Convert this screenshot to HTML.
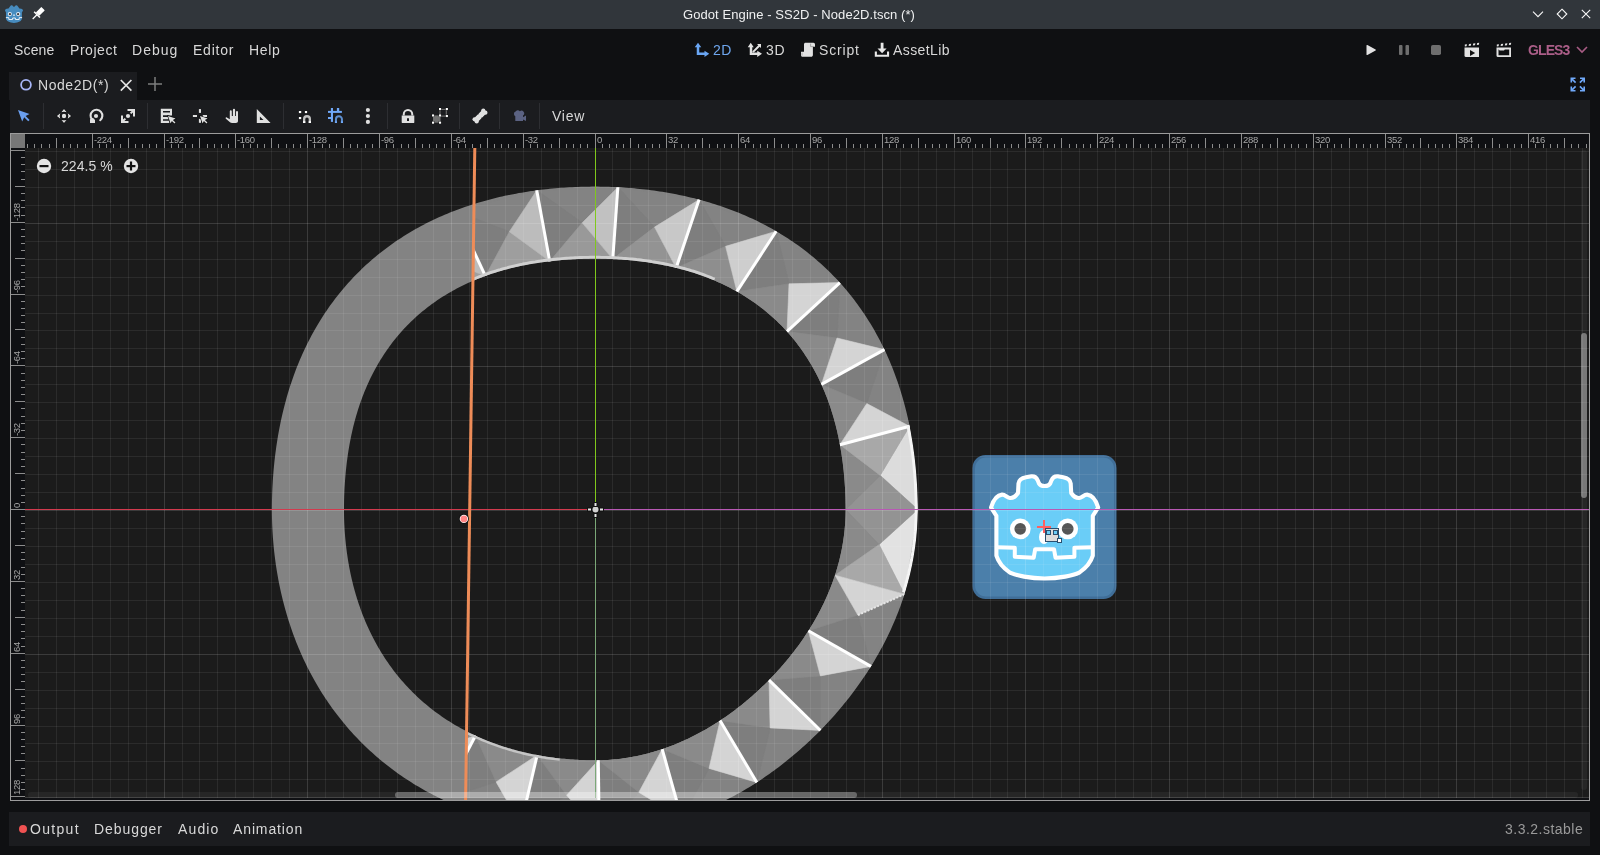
<!DOCTYPE html>
<html><head><meta charset="utf-8"><style>
*{margin:0;padding:0;box-sizing:border-box}
body{width:1600px;height:855px;overflow:hidden;background:#0f1012;font-family:"Liberation Sans",sans-serif;position:relative}
.a{position:absolute;white-space:pre;will-change:transform}
.ic{position:absolute;overflow:visible}
.rl{font-family:"Liberation Sans",sans-serif;font-size:9.5px;fill:#a6a6a6;letter-spacing:-0.3px}
.t14{font-size:14px;line-height:14px;color:#d8d8d8}
</style></head><body>
<div class="a" style="left:0;top:0;width:1600px;height:29px;background:#31363b"></div>
<div class="a" style="left:683px;top:8px;font-size:13px;line-height:13px;color:#eff0f1;letter-spacing:0.08px">Godot Engine - SS2D - Node2D.tscn (*)</div>
<div class="a t14" style="left:14px;top:43px;letter-spacing:0.15px;">Scene</div><div class="a t14" style="left:70px;top:43px;letter-spacing:0.55px;">Project</div><div class="a t14" style="left:132px;top:43px;letter-spacing:1.03px;">Debug</div><div class="a t14" style="left:193px;top:43px;letter-spacing:0.76px;">Editor</div><div class="a t14" style="left:249px;top:43px;letter-spacing:0.70px;">Help</div>
<div class="a t14" style="left:713px;top:43px;letter-spacing:0.49px;color:#6ea6ee">2D</div><div class="a t14" style="left:766px;top:43px;letter-spacing:0.59px;">3D</div><div class="a t14" style="left:819px;top:43px;letter-spacing:0.82px;">Script</div><div class="a t14" style="left:893px;top:43px;letter-spacing:0.41px;">AssetLib</div>
<div class="a" style="left:1528px;top:43px;font-size:14px;line-height:14px;font-weight:bold;color:#ab5e88;letter-spacing:-0.9px">GLES3</div>
<div class="a" style="left:9px;top:72px;width:128px;height:28px;background:#1b1c1f"></div>
<div class="a" style="left:10px;top:100px;width:1580px;height:33px;background:#1b1c1f"></div>
<div class="a t14" style="left:38px;top:78px;letter-spacing:0.56px;">Node2D(*)</div>
<div class="a t14" style="left:552px;top:109px;letter-spacing:0.77px;">View</div>
<div class="a" style="left:43px;top:103px;width:1px;height:26px;background:#2d2e32"></div><div class="a" style="left:147px;top:103px;width:1px;height:26px;background:#2d2e32"></div><div class="a" style="left:283px;top:103px;width:1px;height:26px;background:#2d2e32"></div><div class="a" style="left:387px;top:103px;width:1px;height:26px;background:#2d2e32"></div><div class="a" style="left:459px;top:103px;width:1px;height:26px;background:#2d2e32"></div><div class="a" style="left:499px;top:103px;width:1px;height:26px;background:#2d2e32"></div><div class="a" style="left:539px;top:103px;width:1px;height:26px;background:#2d2e32"></div>
<svg class="ic" style="left:15px;top:107px" width="16" height="16" viewBox="0 0 16 16"><path d="M3,3 L7.2,14.5 L9.2,10.3 L13.2,14.3 L14.6,12.9 L10.6,8.9 L14.5,7 Z" fill="#6a9ff0"/></svg><svg class="ic" style="left:56px;top:108px" width="16" height="16" viewBox="0 0 16 16"><g fill="#e0e0e0" stroke="#0b0b0c" stroke-width="1" paint-order="stroke"><circle cx="8" cy="8" r="2.2"/><path d="M5.3,4.3 L8,0.9 L10.7,4.3 Q8,3.1 5.3,4.3 Z"/><path d="M5.3,11.7 L8,15.1 L10.7,11.7 Q8,12.9 5.3,11.7 Z"/><path d="M4.3,5.3 L0.9,8 L4.3,10.7 Q3.1,8 4.3,5.3 Z"/><path d="M11.7,5.3 L15.1,8 L11.7,10.7 Q12.9,8 11.7,5.3 Z"/></g></svg><svg class="ic" style="left:88px;top:108px" width="16" height="16" viewBox="0 0 16 16"><path d="M4.1,11.6 A5.9,5.9 0 1 1 12.2,12.2" fill="none" stroke="#e0e0e0" stroke-width="2.1" stroke-linecap="round"/><path d="M2,15 V11.2 L4.9,9.8 L7,12 V15 Z" fill="#e0e0e0"/><circle cx="8" cy="8" r="2.1" fill="#e0e0e0"/></svg><svg class="ic" style="left:120px;top:108px" width="16" height="16" viewBox="0 0 16 16"><g fill="#e0e0e0"><circle cx="8" cy="8" r="2.1"/><path d="M7.5,1 H15 V8.5 H13 V4.4 L11.3,6.1 L9.9,4.7 L11.6,3 H7.5 Z"/><path d="M8.5,15 H1 V7.5 H3 V11.6 L4.7,9.9 L6.1,11.3 L4.4,13 H8.5 Z"/></g></svg><svg class="ic" style="left:160px;top:108px" width="16" height="16" viewBox="0 0 16 16"><path fill-rule="evenodd" fill="#e0e0e0" d="M0.8,0.8 H12 V7.6 H9.4 V15 H0.8 Z M3,3 V4.6 H10 V3 Z M3,7.3 V8.9 H9.4 V7.3 Z M3,11.2 V12.8 H9.4 V11.2 Z"/><path d="M8,8 L10.6,15.6 L11.9,12.9 L14.5,15.5 L15.5,14.5 L12.9,11.9 L15.6,10.6 Z" fill="#e0e0e0" stroke="#0b0b0c" stroke-width="1.2" paint-order="stroke"/></svg><svg class="ic" style="left:192px;top:108px" width="16" height="16" viewBox="0 0 16 16"><g fill="#e0e0e0"><rect x="6.9" y="1.1" width="2.1" height="3.8"/><rect x="0.9" y="7" width="4.1" height="2"/><rect x="10.8" y="7" width="4.2" height="2"/><rect x="6.9" y="10.9" width="2.1" height="3.9"/></g><path d="M8,8.1 L10.6,15.6 L11.9,12.9 L14.5,15.5 L15.5,14.5 L12.9,11.9 L15.7,10.6 Z" fill="#e0e0e0" stroke="#0b0b0c" stroke-width="1.2" paint-order="stroke"/></svg><svg class="ic" style="left:224px;top:108px" width="16" height="16" viewBox="0 0 16 16"><path fill="#e0e0e0" d="M5.8,3.3 A1,1 0 0 1 7.8,3.3 V8 H8.9 V1.9 A1.1,1.1 0 0 1 11.1,1.9 V8 H12 V3.9 A1,1 0 0 1 14,3.9 V12.8 C14,14.2 13.2,15 11.8,15 H8.2 C7.2,15 6.4,14.6 5.7,13.9 L1.9,10.7 C1.2,10.1 1.9,8.9 2.8,9.4 L5.8,11.2 Z"/></svg><svg class="ic" style="left:256px;top:108px" width="16" height="16" viewBox="0 0 16 16"><path fill-rule="evenodd" fill="#e0e0e0" d="M0.8,1 L14.6,15 H0.8 Z M3.9,8.4 V11.9 H7.5 Z"/></svg><svg class="ic" style="left:296px;top:108px" width="16" height="16" viewBox="0 0 16 16"><g fill="#ffffff"><rect x="2.9" y="3" width="2.3" height="2.1"/><rect x="8.9" y="3" width="2.2" height="2.1"/><rect x="2.9" y="9" width="2.3" height="2.1"/></g><path d="M8.15,15 V11.1 A2.85,2.85 0 0 1 13.85,11.1 V15" fill="none" stroke="#c2c2c2" stroke-width="2.3"/><rect x="7" y="13.2" width="2.3" height="1.8" fill="#fff"/><rect x="12.7" y="13.2" width="2.3" height="1.8" fill="#fff"/></svg><svg class="ic" style="left:327px;top:108px" width="16" height="16" viewBox="0 0 16 16"><g fill="#70a8f8"><rect x="3.9" y="0" width="2.1" height="13.9"/><rect x="9.9" y="0" width="2.3" height="3.8"/><rect x="1" y="2.9" width="13.9" height="2"/><rect x="1" y="9" width="4.9" height="2"/></g><path d="M8.95,15 V11.25 A3,3 0 0 1 14.95,11.25 V15" fill="none" stroke="#5e8fd0" stroke-width="2"/><rect x="7.9" y="13.3" width="2.1" height="1.7" fill="#70a8f8"/><rect x="13.9" y="13.3" width="2.1" height="1.7" fill="#70a8f8"/></svg><svg class="ic" style="left:360px;top:108px" width="16" height="16" viewBox="0 0 16 16"><g fill="#e0e0e0"><circle cx="7.9" cy="2" r="2.1"/><circle cx="7.9" cy="8" r="2.1"/><circle cx="7.9" cy="13.9" r="2.1"/></g></svg><svg class="ic" style="left:400px;top:108px" width="16" height="16" viewBox="0 0 16 16"><path fill="none" stroke="#e0e0e0" stroke-width="2" d="M3.75,7.6 V6.15 A4.25,4.25 0 0 1 12.25,6.15 V7.6"/><path fill-rule="evenodd" fill="#e0e0e0" d="M1.7,7.4 H14.3 V14.2 Q14.3,15.1 13.4,15.1 H2.6 Q1.7,15.1 1.7,14.2 Z M7,10.2 V13 H9 V10.2 Z"/></svg><svg class="ic" style="left:432px;top:108px" width="16" height="16" viewBox="0 0 16 16"><rect x="1" y="7.4" width="7.5" height="7.3" fill="#707070"/><rect x="8" y="1.4" width="6.3" height="6.7" fill="none" stroke="#707070" stroke-width="1.1"/><g fill="#fff" stroke="#0b0b0c" stroke-width="0.6" paint-order="stroke"><rect x="0" y="6.4" width="2.1" height="2.1"/><rect x="7" y="6.4" width="2.1" height="2.1"/><rect x="0" y="13.6" width="2.1" height="2.1"/><rect x="7" y="13.6" width="2.1" height="2.1"/><rect x="7" y="0" width="2.1" height="2.1"/><rect x="13.8" y="0" width="2.1" height="2.1"/><rect x="13.8" y="7" width="2.1" height="2.1"/></g></svg><svg class="ic" style="left:472px;top:108px" width="16" height="16" viewBox="0 0 16 16"><g fill="#e0e0e0"><path d="M3.8,8.9 L8.9,3.8 L12.2,7.1 L7.1,12.2 Z"/><circle cx="11.3" cy="2.6" r="2.1"/><circle cx="13.4" cy="4.7" r="2.1"/><circle cx="2.6" cy="11.3" r="2.1"/><circle cx="4.7" cy="13.4" r="2.1"/><path d="M9.8,2.6 L13.4,6.2 L10.2,9.4 L6.6,5.8 Z M6.2,13.4 L2.6,9.8 L5.8,6.6 L9.4,10.2 Z"/></g></svg><svg class="ic" style="left:511px;top:108px" width="16" height="16" viewBox="0 0 16 16"><path fill="#5b6282" d="M4.6,3.6 A2.4,2.4 0 0 1 8.8,3.2 A2.4,2.4 0 1 1 12,7.6 V9.2 L15,7.6 V13.1 L12,11.5 V13.1 H4.3 V8.2 A2.5,2.5 0 0 1 4.6,3.6 Z"/></svg>
<svg class="ic" style="left:5px;top:5px" width="18" height="18" viewBox="0 0 18 18"><path fill="#478cbf" d="M0,5.5 C0.3,4.6 0.9,3.9 1.6,3.8 L3.5,3.5 L5.2,1.3 C5.6,0.6 6,0.3 6.5,0.3 C7.2,0.3 7.8,0.8 8.1,1.3 L9,2 L9.8,1.3 C10.2,0.8 10.8,0.3 11.4,0.3 C11.9,0.3 12.4,0.6 12.8,1.3 L14.4,3.4 L16.3,3.8 C17.1,3.9 17.7,4.6 18,5.5 L16.9,7.4 V13.3 C16.9,16 13.5,17.9 9,17.9 C4.5,17.9 1,16 1,13.3 V7.4 Z"/><path d="M0.9,12.6 H3.8 V14.5 H7.6 V13 H10.4 V14.5 H14.2 V12.6 H17.1" fill="none" stroke="#e6eef6" stroke-width="1"/><circle cx="4.8" cy="9.1" r="2.1" fill="#e6eef6"/><circle cx="13.2" cy="9.1" r="2.1" fill="#e6eef6"/><circle cx="4.9" cy="9.2" r="1.15" fill="#414042"/><circle cx="13.1" cy="9.2" r="1.15" fill="#414042"/><rect x="8.3" y="9.3" width="1.4" height="1.8" rx="0.6" fill="#e6eef6"/></svg><svg class="ic" style="left:32px;top:7px" width="13" height="13" viewBox="0 0 13 13"><g transform="translate(0.7,12) rotate(-45)" fill="#ffffff"><rect x="0" y="-0.6" width="6" height="1.2"/><rect x="5.4" y="-4.1" width="1.5" height="8.2"/><rect x="6.8" y="-2.4" width="7.8" height="4.8" rx="0.4"/></g></svg><svg class="ic" style="left:1531px;top:8px" width="14" height="14" viewBox="0 0 14 14"><path d="M2,3.6 L7,8.6 L12,3.6" fill="none" stroke="#f8f8f8" stroke-width="1.1"/></svg><svg class="ic" style="left:1555px;top:7px" width="14" height="14" viewBox="0 0 14 14"><path d="M7,2.2 L11.8,7 L7,11.8 L2.2,7 Z" fill="none" stroke="#f8f8f8" stroke-width="1.1"/></svg><svg class="ic" style="left:1579px;top:7px" width="14" height="14" viewBox="0 0 14 14"><path d="M2.8,2.8 L11.2,11.2 M11.2,2.8 L2.8,11.2" fill="none" stroke="#f8f8f8" stroke-width="1.1"/></svg><svg class="ic" style="left:18px;top:77px" width="16" height="16" viewBox="0 0 16 16"><circle cx="8" cy="7.8" r="4.9" fill="none" stroke="#a7b5f7" stroke-width="1.8"/></svg><svg class="ic" style="left:118px;top:77px" width="16" height="16" viewBox="0 0 16 16"><path d="M2.8,3 L13.4,13.6 M13.4,3 L2.8,13.6" fill="none" stroke="#e4e4e4" stroke-width="1.7"/></svg><svg class="ic" style="left:147px;top:76px" width="16" height="16" viewBox="0 0 16 16"><path d="M8,1 V15 M1,8 H15" fill="none" stroke="#7e7e7e" stroke-width="1.5"/></svg><svg class="ic" style="left:694px;top:42px" width="16" height="16" viewBox="0 0 16 16"><path fill="#6aa6f4" d="M0.75,5.25 L4,0.75 L7.25,5.25 H5.25 V10.5 H10.5 V8.75 L15.25,11.75 L10.5,15 V13 H2.75 V5.25 Z"/></svg><svg class="ic" style="left:746px;top:42px" width="17" height="16" viewBox="0 0 17 16"><g fill="#e2e2e2"><path d="M1.75,5.25 L4.75,0.75 L7.75,5.25 H6.25 V10.5 H11.25 V8.75 L16,11.75 L11.25,15 V13 H3.75 V5.25 Z"/><path d="M11,2 H15 V6 L13.7,4.7 L7.6,10.8 L6.2,9.4 L12.3,3.3 Z"/></g></svg><svg class="ic" style="left:800px;top:42px" width="16" height="16" viewBox="0 0 16 16"><path fill="#e2e2e2" d="M5.6,0.7 H13.4 C14.4,0.7 15,1.5 15,2.5 V4.8 H12.9 V13 C12.9,14 12.1,14.8 11.1,14.8 H2.6 C1.6,14.8 1,14 1,13 V9.8 H4 V2.4 C4,1.4 4.6,0.7 5.6,0.7 Z"/><path d="M10.6,1.6 V4.6 H13.6" fill="none" stroke="#8a8a8a" stroke-width="0.7"/><path d="M2,10.6 V13.6" stroke="#8a8a8a" stroke-width="0.6"/></svg><svg class="ic" style="left:874px;top:42px" width="16" height="16" viewBox="0 0 16 16"><g fill="#e8e8e8"><path d="M6.7,0.7 H9.5 V6.6 H12.6 L8.1,11.2 L3.5,6.6 H6.7 Z"/><path d="M0.8,9.4 H2.9 V12.7 H13 V9.4 H15.1 V14.8 H0.8 Z"/></g></svg><svg class="ic" style="left:1363px;top:42px" width="16" height="16" viewBox="0 0 16 16"><path d="M3.5,3.6 Q3.5,2.6 4.4,3.1 L12.6,7.4 Q13.3,8 12.6,8.6 L4.4,12.9 Q3.5,13.4 3.5,12.4 Z" fill="#e2e2e2"/></svg><svg class="ic" style="left:1396px;top:42px" width="16" height="16" viewBox="0 0 16 16"><g fill="#6e6e6e"><rect x="3" y="3" width="3.5" height="10" rx="0.9"/><rect x="9.5" y="3" width="3.5" height="10" rx="0.9"/></g></svg><svg class="ic" style="left:1428px;top:42px" width="16" height="16" viewBox="0 0 16 16"><rect x="3" y="3" width="10" height="10" rx="1.8" fill="#6e6e6e"/></svg><svg class="ic" style="left:1464px;top:42px" width="16" height="16" viewBox="0 0 16 16"><g fill="#e2e2e2"><path d="M0.8,2.6 L3,2.3 L2.6,4.3 L0.8,4.5 Z M5,2 L7.2,1.7 L6.8,3.7 L4.6,3.9 Z M9.2,1.5 L11.4,1.2 L11,3.2 L8.8,3.4 Z M13.2,1 L15.2,0.8 L14.9,2.8 L12.8,3 Z"/><path d="M0.5,5.6 H15 V15 H2 Q0.5,15 0.5,13.5 Z"/></g><path d="M6,8 L11.2,11 L6,14 Z" fill="#111"/></svg><svg class="ic" style="left:1496px;top:42px" width="16" height="16" viewBox="0 0 16 16"><g fill="#e2e2e2"><path d="M0.8,2.6 L3,2.3 L2.6,4.3 L0.8,4.5 Z M5,2 L7.2,1.7 L6.8,3.7 L4.6,3.9 Z M9.2,1.5 L11.4,1.2 L11,3.2 L8.8,3.4 Z M13.2,1 L15.2,0.8 L14.9,2.8 L12.8,3 Z"/><path fill-rule="evenodd" d="M0.5,5.6 H15 V15 H2 Q0.5,15 0.5,13.5 Z M2.5,7.6 V13.3 H13.2 V7.6 H8.8 L8,8.6 H3.6 L2.8,7.6 Z"/></g></svg><svg class="ic" style="left:1575px;top:42px" width="14" height="16" viewBox="0 0 14 16"><path d="M2,5 L7,10 L12,5" fill="none" stroke="#a85c84" stroke-width="1.6"/></svg><svg class="ic" style="left:1570px;top:77px" width="16" height="16" viewBox="0 0 16 16"><g fill="none" stroke="#70a8f8" stroke-width="1.6"><path d="M1.3,5.5 V1.3 H5.5 M1.6,1.6 L5.6,5.6"/><path d="M14.2,5.5 V1.3 H10 M13.9,1.6 L9.9,5.6"/><path d="M1.3,9.5 V13.7 H5.5 M1.6,13.4 L5.6,9.4"/><path d="M14.2,9.5 V13.7 H10 M13.9,13.4 L9.9,9.4"/></g></svg>
<svg id="cv" width="1600" height="855" viewBox="0 0 1600 855" style="position:absolute;left:0;top:0;will-change:transform"><defs><clipPath id="gclip"><rect x="25" y="148" width="1564" height="652"/></clipPath><clipPath id="spk"><path d="M474.5,148 L465.5,800 L1600,800 L1600,148 Z"/></clipPath><clipPath id="ringc"><path fill-rule="evenodd" d="M272.5,509.5 a323,323 0 1,0 646,0 a323,323 0 1,0 -646,0 Z M344.5,509.5 a251,251 0 1,0 502,0 a251,251 0 1,0 -502,0 Z"/></clipPath><filter id="soft" x="-5%" y="-5%" width="110%" height="110%"><feGaussianBlur stdDeviation="0.55"/></filter></defs><rect x="10" y="133" width="1580" height="667" fill="#0f1013"/><rect x="25" y="148" width="1564" height="650" fill="#1b1b1b"/><g clip-path="url(#gclip)"><path fill-rule="evenodd" fill="#838383" d="M917.70,509.50 L917.69,512.32 L917.64,515.14 L917.57,517.95 L917.47,520.77 L917.34,523.58 L917.18,526.40 L916.99,529.21 L916.77,532.01 L916.53,534.82 L916.25,537.62 L915.95,540.42 L915.62,543.22 L915.26,546.01 L914.87,548.80 L914.46,551.58 L914.02,554.36 L913.54,557.14 L913.05,559.91 L912.52,562.67 L911.96,565.42 L911.38,568.18 L910.78,570.92 L910.14,573.66 L909.48,576.39 L908.79,579.11 L908.08,581.83 L907.34,584.53 L906.57,587.23 L905.78,589.92 L904.96,592.61 L904.12,595.28 L903.25,597.95 L902.36,600.60 L901.44,603.25 L900.50,605.89 L899.53,608.51 L898.54,611.13 L897.53,613.74 L896.49,616.33 L895.43,618.92 L894.35,621.50 L893.24,624.06 L892.12,626.62 L890.97,629.16 L889.79,631.69 L888.60,634.21 L887.39,636.72 L886.15,639.22 L884.89,641.70 L883.62,644.18 L882.32,646.64 L881.00,649.09 L879.66,651.53 L878.31,653.95 L876.93,656.37 L875.53,658.77 L874.12,661.16 L872.69,663.53 L871.23,665.90 L869.76,668.25 L868.27,670.59 L866.77,672.91 L865.24,675.23 L863.70,677.53 L862.14,679.82 L860.57,682.09 L858.97,684.35 L857.36,686.60 L855.74,688.84 L854.10,691.06 L852.44,693.27 L850.76,695.47 L849.07,697.65 L847.37,699.82 L845.64,701.98 L843.91,704.12 L842.15,706.25 L840.39,708.37 L838.60,710.48 L836.81,712.57 L834.99,714.65 L833.17,716.71 L831.33,718.76 L829.47,720.80 L827.60,722.82 L825.71,724.83 L823.81,726.83 L821.90,728.81 L819.97,730.78 L818.03,732.73 L816.08,734.67 L814.11,736.60 L812.13,738.51 L810.13,740.41 L808.12,742.30 L806.10,744.17 L804.06,746.03 L802.01,747.87 L799.95,749.69 L797.87,751.51 L795.78,753.30 L793.67,755.09 L791.55,756.85 L789.42,758.61 L787.28,760.34 L785.12,762.07 L782.95,763.77 L780.77,765.46 L778.57,767.14 L776.36,768.80 L774.14,770.44 L771.90,772.06 L769.65,773.67 L767.39,775.27 L765.12,776.84 L762.83,778.40 L760.53,779.94 L758.21,781.47 L755.89,782.97 L753.55,784.46 L751.20,785.93 L748.83,787.39 L746.46,788.82 L744.07,790.23 L741.67,791.63 L739.25,793.01 L736.83,794.36 L734.39,795.70 L731.94,797.02 L729.48,798.32 L727.00,799.59 L724.52,800.85 L722.02,802.09 L719.51,803.30 L716.99,804.49 L714.46,805.67 L711.92,806.82 L709.36,807.94 L706.80,809.05 L704.22,810.13 L701.63,811.19 L699.04,812.23 L696.43,813.24 L693.81,814.23 L691.19,815.20 L688.55,816.14 L685.90,817.06 L683.25,817.95 L680.58,818.82 L677.91,819.66 L675.22,820.48 L672.53,821.27 L669.83,822.04 L667.13,822.78 L664.41,823.49 L661.69,824.18 L658.96,824.84 L656.22,825.48 L653.48,826.08 L650.72,826.66 L647.97,827.22 L645.21,827.75 L642.44,828.24 L639.66,828.72 L636.88,829.16 L634.10,829.57 L631.31,829.96 L628.52,830.32 L625.72,830.65 L622.92,830.95 L620.12,831.23 L617.31,831.47 L614.51,831.69 L611.70,831.88 L608.88,832.04 L606.07,832.17 L603.25,832.27 L600.44,832.34 L597.62,832.39 L594.80,832.40 L591.98,832.39 L589.16,832.36 L586.35,832.31 L583.53,832.24 L580.71,832.15 L577.90,832.03 L575.08,831.90 L572.27,831.75 L569.45,831.57 L566.64,831.38 L563.83,831.16 L561.02,830.93 L558.21,830.67 L555.40,830.39 L552.59,830.10 L549.79,829.78 L546.99,829.44 L544.18,829.08 L541.39,828.69 L538.59,828.29 L535.79,827.86 L533.00,827.42 L530.21,826.95 L527.43,826.46 L524.64,825.95 L521.87,825.42 L519.09,824.86 L516.32,824.28 L513.55,823.68 L510.78,823.06 L508.02,822.42 L505.26,821.75 L502.51,821.07 L499.76,820.35 L497.02,819.62 L494.28,818.86 L491.55,818.08 L488.82,817.28 L486.10,816.45 L483.39,815.61 L480.68,814.73 L477.98,813.84 L475.28,812.92 L472.59,811.97 L469.91,811.01 L467.24,810.02 L464.57,809.00 L461.91,807.97 L459.27,806.90 L456.63,805.82 L453.99,804.71 L451.37,803.57 L448.76,802.41 L446.16,801.23 L443.56,800.02 L440.98,798.79 L438.41,797.54 L435.85,796.25 L433.30,794.95 L430.76,793.62 L428.24,792.27 L425.72,790.89 L423.22,789.49 L420.74,788.06 L418.26,786.61 L415.80,785.14 L413.35,783.64 L410.92,782.11 L408.50,780.57 L406.10,779.00 L403.71,777.40 L401.34,775.78 L398.98,774.14 L396.64,772.47 L394.31,770.78 L392.00,769.07 L389.71,767.33 L387.44,765.57 L385.18,763.79 L382.94,761.98 L380.72,760.15 L378.52,758.30 L376.34,756.43 L374.17,754.53 L372.03,752.62 L369.90,750.68 L367.79,748.71 L365.71,746.73 L363.64,744.73 L361.60,742.70 L359.57,740.66 L357.57,738.59 L355.59,736.51 L353.62,734.40 L351.68,732.27 L349.77,730.13 L347.87,727.96 L346.00,725.78 L344.15,723.58 L342.32,721.36 L340.51,719.12 L338.73,716.86 L336.97,714.59 L335.23,712.30 L333.52,709.99 L331.83,707.66 L330.16,705.32 L328.52,702.96 L326.90,700.59 L325.30,698.20 L323.73,695.80 L322.19,693.38 L320.66,690.95 L319.16,688.50 L317.69,686.04 L316.24,683.56 L314.81,681.08 L313.41,678.58 L312.03,676.06 L310.68,673.54 L309.35,671.00 L308.05,668.45 L306.76,665.89 L305.51,663.32 L304.28,660.74 L303.07,658.14 L301.89,655.54 L300.73,652.93 L299.59,650.31 L298.48,647.67 L297.40,645.03 L296.33,642.39 L295.30,639.73 L294.28,637.06 L293.29,634.39 L292.33,631.71 L291.38,629.02 L290.46,626.32 L289.57,623.62 L288.69,620.91 L287.85,618.20 L287.02,615.48 L286.22,612.75 L285.44,610.02 L284.68,607.28 L283.95,604.54 L283.23,601.79 L282.55,599.04 L281.88,596.28 L281.24,593.52 L280.62,590.75 L280.02,587.98 L279.44,585.21 L278.88,582.43 L278.35,579.66 L277.84,576.87 L277.35,574.09 L276.88,571.30 L276.44,568.51 L276.01,565.71 L275.61,562.91 L275.22,560.12 L274.86,557.31 L274.52,554.51 L274.20,551.71 L273.91,548.90 L273.63,546.09 L273.37,543.28 L273.14,540.47 L272.92,537.66 L272.73,534.85 L272.55,532.03 L272.40,529.22 L272.27,526.40 L272.15,523.59 L272.06,520.77 L271.99,517.95 L271.94,515.14 L271.91,512.32 L271.90,509.50 L271.91,506.68 L271.93,503.86 L271.98,501.05 L272.04,498.23 L272.12,495.41 L272.21,492.59 L272.32,489.78 L272.45,486.96 L272.60,484.14 L272.77,481.33 L272.95,478.51 L273.15,475.69 L273.37,472.88 L273.61,470.06 L273.87,467.25 L274.14,464.43 L274.43,461.62 L274.74,458.81 L275.07,456.00 L275.42,453.19 L275.79,450.38 L276.18,447.57 L276.59,444.76 L277.01,441.95 L277.46,439.15 L277.93,436.34 L278.42,433.54 L278.93,430.74 L279.45,427.95 L280.00,425.15 L280.58,422.36 L281.17,419.57 L281.78,416.78 L282.42,414.00 L283.08,411.21 L283.76,408.44 L284.46,405.66 L285.19,402.89 L285.94,400.13 L286.71,397.37 L287.51,394.61 L288.33,391.86 L289.18,389.11 L290.04,386.37 L290.94,383.64 L291.85,380.91 L292.80,378.18 L293.76,375.47 L294.75,372.76 L295.77,370.06 L296.81,367.37 L297.88,364.68 L298.98,362.01 L300.10,359.34 L301.24,356.68 L302.41,354.04 L303.61,351.40 L304.84,348.77 L306.09,346.15 L307.37,343.55 L308.67,340.96 L310.00,338.38 L311.36,335.81 L312.74,333.25 L314.16,330.71 L315.59,328.18 L317.06,325.67 L318.55,323.17 L320.07,320.68 L321.62,318.21 L323.19,315.76 L324.79,313.32 L326.41,310.90 L328.07,308.50 L329.74,306.12 L331.45,303.75 L333.18,301.40 L334.94,299.07 L336.72,296.76 L338.53,294.46 L340.36,292.19 L342.22,289.94 L344.11,287.71 L346.02,285.50 L347.95,283.31 L349.91,281.14 L351.90,278.99 L353.90,276.87 L355.94,274.77 L357.99,272.69 L360.07,270.64 L362.17,268.60 L364.29,266.60 L366.44,264.61 L368.61,262.65 L370.80,260.72 L373.01,258.81 L375.24,256.92 L377.49,255.06 L379.76,253.23 L382.06,251.42 L384.37,249.64 L386.70,247.88 L389.05,246.15 L391.42,244.44 L393.80,242.77 L396.20,241.11 L398.62,239.49 L401.06,237.89 L403.51,236.32 L405.98,234.77 L408.47,233.25 L410.97,231.76 L413.48,230.29 L416.01,228.86 L418.55,227.44 L421.11,226.06 L423.68,224.70 L426.26,223.37 L428.85,222.07 L431.45,220.79 L434.07,219.54 L436.70,218.31 L439.34,217.11 L441.98,215.94 L444.64,214.80 L447.31,213.68 L449.98,212.58 L452.67,211.51 L455.36,210.47 L458.06,209.45 L460.77,208.46 L463.48,207.50 L466.21,206.55 L468.94,205.64 L471.67,204.74 L474.41,203.88 L477.16,203.03 L479.91,202.21 L482.67,201.41 L485.43,200.64 L488.19,199.89 L490.96,199.16 L493.74,198.46 L496.51,197.78 L499.30,197.12 L502.08,196.48 L504.87,195.87 L507.66,195.28 L510.45,194.70 L513.25,194.15 L516.04,193.63 L518.84,193.12 L521.64,192.63 L524.45,192.16 L527.25,191.71 L530.06,191.29 L532.87,190.88 L535.68,190.49 L538.49,190.12 L541.30,189.77 L544.11,189.44 L546.92,189.13 L549.73,188.84 L552.55,188.57 L555.36,188.31 L558.18,188.07 L560.99,187.85 L563.81,187.65 L566.63,187.47 L569.44,187.30 L572.26,187.15 L575.08,187.02 L577.89,186.91 L580.71,186.82 L583.53,186.74 L586.35,186.68 L589.16,186.63 L591.98,186.61 L594.80,186.60 L597.62,186.61 L600.44,186.64 L603.25,186.68 L606.07,186.74 L608.89,186.82 L611.71,186.92 L614.52,187.04 L617.34,187.17 L620.16,187.32 L622.97,187.50 L625.79,187.68 L628.60,187.89 L631.42,188.12 L634.23,188.36 L637.04,188.63 L639.86,188.91 L642.67,189.21 L645.48,189.53 L648.29,189.87 L651.10,190.23 L653.90,190.61 L656.71,191.00 L659.51,191.42 L662.32,191.86 L665.12,192.32 L667.92,192.80 L670.71,193.30 L673.51,193.82 L676.30,194.36 L679.09,194.92 L681.88,195.51 L684.66,196.11 L687.44,196.74 L690.22,197.39 L693.00,198.06 L695.77,198.76 L698.53,199.47 L701.30,200.21 L704.05,200.98 L706.81,201.76 L709.56,202.57 L712.30,203.41 L715.04,204.26 L717.77,205.15 L720.49,206.05 L723.21,206.98 L725.92,207.94 L728.63,208.92 L731.33,209.92 L734.02,210.95 L736.70,212.00 L739.37,213.08 L742.04,214.19 L744.69,215.32 L747.34,216.48 L749.97,217.66 L752.60,218.87 L755.22,220.10 L757.82,221.36 L760.41,222.65 L762.99,223.96 L765.56,225.30 L768.12,226.67 L770.66,228.06 L773.19,229.48 L775.71,230.92 L778.21,232.40 L780.70,233.89 L783.17,235.42 L785.63,236.97 L788.07,238.54 L790.50,240.15 L792.91,241.77 L795.30,243.43 L797.67,245.11 L800.03,246.82 L802.37,248.55 L804.69,250.31 L806.99,252.09 L809.28,253.90 L811.54,255.73 L813.78,257.59 L816.01,259.47 L818.21,261.38 L820.39,263.31 L822.55,265.27 L824.69,267.25 L826.81,269.25 L828.90,271.28 L830.97,273.33 L833.02,275.40 L835.05,277.49 L837.05,279.61 L839.03,281.75 L840.99,283.91 L842.92,286.09 L844.83,288.29 L846.71,290.52 L848.57,292.76 L850.40,295.02 L852.21,297.31 L853.99,299.61 L855.75,301.93 L857.48,304.27 L859.19,306.63 L860.87,309.00 L862.53,311.39 L864.15,313.80 L865.76,316.23 L867.33,318.67 L868.88,321.13 L870.41,323.60 L871.90,326.09 L873.38,328.59 L874.82,331.11 L876.24,333.64 L877.63,336.18 L879.00,338.74 L880.34,341.31 L881.65,343.89 L882.94,346.48 L884.20,349.08 L885.43,351.70 L886.64,354.33 L887.82,356.96 L888.98,359.61 L890.11,362.26 L891.22,364.93 L892.30,367.60 L893.35,370.28 L894.38,372.97 L895.38,375.67 L896.36,378.38 L897.32,381.09 L898.25,383.81 L899.15,386.53 L900.04,389.26 L900.89,392.00 L901.73,394.74 L902.54,397.49 L903.32,400.25 L904.09,403.00 L904.83,405.77 L905.54,408.53 L906.24,411.30 L906.91,414.08 L907.56,416.86 L908.19,419.64 L908.79,422.42 L909.38,425.21 L909.94,428.00 L910.48,430.79 L911.00,433.59 L911.50,436.38 L911.98,439.18 L912.44,441.98 L912.88,444.79 L913.30,447.59 L913.69,450.40 L914.07,453.20 L914.43,456.01 L914.77,458.82 L915.09,461.63 L915.39,464.44 L915.67,467.26 L915.94,470.07 L916.18,472.88 L916.41,475.70 L916.62,478.51 L916.80,481.33 L916.98,484.14 L917.13,486.96 L917.26,489.78 L917.38,492.59 L917.48,495.41 L917.56,498.23 L917.62,501.05 L917.66,503.86 L917.69,506.68 Z M845.59,507.31 L845.58,505.12 L845.54,502.93 L845.50,500.75 L845.45,498.56 L845.38,496.37 L845.30,494.18 L845.21,491.99 L845.10,489.80 L844.98,487.61 L844.85,485.42 L844.71,483.23 L844.55,481.04 L844.38,478.86 L844.20,476.67 L844.00,474.48 L843.79,472.29 L843.57,470.10 L843.33,467.91 L843.08,465.72 L842.81,463.53 L842.53,461.35 L842.24,459.16 L841.93,456.97 L841.61,454.78 L841.27,452.60 L840.91,450.41 L840.55,448.23 L840.16,446.05 L839.76,443.86 L839.34,441.68 L838.91,439.50 L838.46,437.33 L837.99,435.15 L837.51,432.97 L837.01,430.80 L836.49,428.63 L835.95,426.47 L835.40,424.30 L834.82,422.14 L834.23,419.98 L833.62,417.82 L833.00,415.67 L832.35,413.52 L831.68,411.38 L831.00,409.24 L830.29,407.10 L829.57,404.97 L828.82,402.85 L828.06,400.73 L827.27,398.62 L826.47,396.51 L825.64,394.41 L824.80,392.31 L823.93,390.22 L823.04,388.14 L822.13,386.07 L821.20,384.00 L820.25,381.95 L819.27,379.90 L818.28,377.86 L817.26,375.83 L816.22,373.81 L815.16,371.80 L814.08,369.80 L812.98,367.81 L811.85,365.84 L810.70,363.87 L809.54,361.92 L808.34,359.97 L807.13,358.05 L805.90,356.13 L804.64,354.23 L803.36,352.34 L802.06,350.46 L800.74,348.60 L799.40,346.75 L798.04,344.92 L796.65,343.11 L795.24,341.31 L793.82,339.52 L792.37,337.75 L790.90,336.00 L789.41,334.27 L787.90,332.55 L786.37,330.85 L784.83,329.17 L783.26,327.51 L781.67,325.86 L780.06,324.24 L778.44,322.63 L776.79,321.04 L775.13,319.47 L773.45,317.93 L771.75,316.40 L770.03,314.89 L768.30,313.40 L766.55,311.93 L764.78,310.48 L762.99,309.06 L761.19,307.65 L759.38,306.26 L757.55,304.90 L755.70,303.56 L753.84,302.24 L751.96,300.94 L750.07,299.66 L748.17,298.40 L746.25,297.17 L744.33,295.96 L742.38,294.76 L740.43,293.60 L738.46,292.45 L736.49,291.32 L734.50,290.22 L732.50,289.14 L730.49,288.08 L728.47,287.04 L726.44,286.02 L724.40,285.03 L722.35,284.05 L720.30,283.10 L718.23,282.17 L716.16,281.26 L714.08,280.37 L711.99,279.50 L709.89,278.66 L707.79,277.83 L705.68,277.03 L703.57,276.24 L701.45,275.48 L699.33,274.73 L697.20,274.01 L695.06,273.30 L692.92,272.62 L690.78,271.95 L688.63,271.30 L686.48,270.68 L684.32,270.07 L682.16,269.48 L680.00,268.90 L677.83,268.35 L675.67,267.81 L673.50,267.29 L671.33,266.79 L669.15,266.31 L666.97,265.84 L664.80,265.39 L662.62,264.96 L660.44,264.54 L658.25,264.14 L656.07,263.75 L653.89,263.39 L651.70,263.03 L649.52,262.69 L647.33,262.37 L645.14,262.06 L642.95,261.77 L640.77,261.49 L638.58,261.22 L636.39,260.97 L634.20,260.73 L632.01,260.51 L629.82,260.30 L627.63,260.10 L625.44,259.92 L623.26,259.75 L621.07,259.59 L618.88,259.45 L616.69,259.32 L614.50,259.20 L612.31,259.09 L610.12,259.00 L607.93,258.92 L605.74,258.85 L603.55,258.80 L601.37,258.76 L599.18,258.72 L596.99,258.71 L594.80,258.70 L592.61,258.71 L590.42,258.72 L588.23,258.75 L586.05,258.79 L583.86,258.85 L581.67,258.91 L579.48,258.99 L577.29,259.08 L575.10,259.18 L572.91,259.29 L570.72,259.42 L568.53,259.56 L566.34,259.71 L564.15,259.87 L561.96,260.05 L559.77,260.24 L557.58,260.44 L555.39,260.66 L553.20,260.89 L551.01,261.13 L548.81,261.38 L546.62,261.65 L544.43,261.94 L542.24,262.24 L540.05,262.55 L537.86,262.88 L535.67,263.22 L533.49,263.58 L531.30,263.96 L529.11,264.35 L526.93,264.75 L524.74,265.18 L522.56,265.62 L520.38,266.07 L518.20,266.54 L516.02,267.03 L513.84,267.54 L511.67,268.06 L509.49,268.61 L507.33,269.17 L505.16,269.74 L503.00,270.34 L500.84,270.96 L498.68,271.59 L496.53,272.25 L494.38,272.92 L492.23,273.62 L490.09,274.33 L487.96,275.06 L485.83,275.82 L483.71,276.59 L481.59,277.39 L479.48,278.20 L477.37,279.04 L475.28,279.90 L473.18,280.77 L471.10,281.68 L469.03,282.60 L466.96,283.54 L464.90,284.51 L462.85,285.49 L460.81,286.50 L458.78,287.53 L456.76,288.59 L454.75,289.66 L452.75,290.76 L450.76,291.88 L448.79,293.02 L446.82,294.19 L444.87,295.38 L442.93,296.59 L441.00,297.82 L439.09,299.07 L437.19,300.35 L435.31,301.64 L433.44,302.96 L431.58,304.31 L429.74,305.67 L427.92,307.05 L426.11,308.46 L424.32,309.89 L422.54,311.34 L420.78,312.81 L419.04,314.30 L417.32,315.81 L415.61,317.34 L413.92,318.90 L412.25,320.47 L410.60,322.06 L408.97,323.67 L407.36,325.30 L405.77,326.95 L404.20,328.62 L402.64,330.31 L401.11,332.02 L399.60,333.74 L398.11,335.48 L396.64,337.24 L395.19,339.02 L393.76,340.81 L392.35,342.62 L390.97,344.44 L389.61,346.28 L388.26,348.14 L386.94,350.01 L385.65,351.89 L384.37,353.79 L383.12,355.70 L381.89,357.63 L380.68,359.57 L379.49,361.52 L378.32,363.49 L377.18,365.46 L376.06,367.45 L374.96,369.45 L373.89,371.46 L372.83,373.48 L371.80,375.51 L370.79,377.55 L369.81,379.60 L368.84,381.66 L367.90,383.73 L366.98,385.80 L366.07,387.88 L365.20,389.98 L364.34,392.07 L363.50,394.18 L362.69,396.29 L361.89,398.41 L361.12,400.53 L360.36,402.66 L359.63,404.79 L358.92,406.93 L358.22,409.08 L357.55,411.23 L356.89,413.38 L356.26,415.54 L355.64,417.70 L355.04,419.86 L354.47,422.03 L353.91,424.19 L353.36,426.37 L352.84,428.54 L352.33,430.72 L351.84,432.90 L351.37,435.08 L350.92,437.26 L350.48,439.44 L350.05,441.63 L349.65,443.81 L349.26,446.00 L348.88,448.19 L348.52,450.37 L348.18,452.56 L347.85,454.75 L347.54,456.94 L347.24,459.13 L346.95,461.32 L346.68,463.51 L346.43,465.71 L346.19,467.90 L345.96,470.09 L345.74,472.28 L345.54,474.47 L345.35,476.66 L345.17,478.85 L345.01,481.04 L344.86,483.23 L344.72,485.42 L344.59,487.61 L344.48,489.80 L344.38,491.99 L344.29,494.18 L344.21,496.37 L344.15,498.56 L344.09,500.75 L344.05,502.93 L344.02,505.12 L344.01,507.31 L344.00,509.50 L344.01,511.69 L344.03,513.88 L344.07,516.07 L344.12,518.25 L344.18,520.44 L344.27,522.63 L344.36,524.82 L344.47,527.00 L344.60,529.19 L344.74,531.38 L344.89,533.56 L345.06,535.75 L345.25,537.93 L345.45,540.12 L345.67,542.30 L345.90,544.48 L346.15,546.66 L346.41,548.84 L346.69,551.02 L346.98,553.20 L347.29,555.37 L347.62,557.55 L347.96,559.72 L348.32,561.89 L348.69,564.06 L349.08,566.23 L349.49,568.39 L349.91,570.56 L350.35,572.72 L350.81,574.88 L351.28,577.03 L351.77,579.19 L352.28,581.34 L352.81,583.49 L353.35,585.63 L353.91,587.77 L354.49,589.91 L355.08,592.04 L355.70,594.17 L356.33,596.30 L356.98,598.42 L357.65,600.53 L358.34,602.65 L359.04,604.75 L359.77,606.85 L360.51,608.95 L361.27,611.04 L362.05,613.13 L362.85,615.21 L363.67,617.28 L364.51,619.34 L365.36,621.40 L366.24,623.46 L367.14,625.50 L368.05,627.54 L368.99,629.57 L369.94,631.59 L370.92,633.60 L371.91,635.60 L372.92,637.60 L373.96,639.59 L375.01,641.56 L376.08,643.53 L377.18,645.49 L378.29,647.43 L379.42,649.37 L380.57,651.29 L381.75,653.21 L382.94,655.11 L384.15,657.00 L385.38,658.88 L386.63,660.74 L387.90,662.60 L389.19,664.44 L390.50,666.27 L391.83,668.08 L393.17,669.88 L394.54,671.67 L395.92,673.44 L397.33,675.20 L398.75,676.94 L400.19,678.67 L401.65,680.39 L403.13,682.08 L404.62,683.77 L406.14,685.43 L407.67,687.08 L409.22,688.72 L410.78,690.33 L412.37,691.93 L413.97,693.52 L415.58,695.08 L417.22,696.63 L418.87,698.16 L420.53,699.68 L422.22,701.17 L423.91,702.65 L425.63,704.11 L427.36,705.55 L429.10,706.97 L430.86,708.38 L432.63,709.76 L434.42,711.13 L436.22,712.47 L438.03,713.80 L439.86,715.11 L441.70,716.40 L443.56,717.67 L445.42,718.92 L447.30,720.15 L449.19,721.36 L451.09,722.55 L453.01,723.73 L454.93,724.88 L456.87,726.01 L458.81,727.12 L460.77,728.22 L462.74,729.29 L464.71,730.34 L466.70,731.38 L468.70,732.39 L470.70,733.38 L472.71,734.36 L474.73,735.31 L476.76,736.25 L478.80,737.16 L480.84,738.06 L482.90,738.94 L484.96,739.79 L487.02,740.63 L489.09,741.45 L491.17,742.25 L493.26,743.03 L495.35,743.79 L497.45,744.53 L499.55,745.26 L501.65,745.96 L503.77,746.65 L505.88,747.32 L508.00,747.97 L510.13,748.60 L512.26,749.22 L514.39,749.81 L516.53,750.39 L518.67,750.95 L520.81,751.49 L522.96,752.02 L525.11,752.53 L527.27,753.02 L529.42,753.49 L531.58,753.95 L533.74,754.39 L535.91,754.81 L538.07,755.22 L540.24,755.61 L542.41,755.98 L544.58,756.34 L546.75,756.68 L548.93,757.01 L551.10,757.32 L553.28,757.61 L555.46,757.89 L557.64,758.15 L559.82,758.40 L562.00,758.63 L564.18,758.85 L566.37,759.05 L568.55,759.24 L570.74,759.41 L572.92,759.56 L575.11,759.70 L577.30,759.83 L579.48,759.94 L581.67,760.03 L583.86,760.12 L586.05,760.18 L588.23,760.23 L590.42,760.27 L592.61,760.29 L594.80,760.30 L596.99,760.29 L599.18,760.25 L601.36,760.19 L603.55,760.11 L605.74,760.01 L607.92,759.88 L610.10,759.73 L612.29,759.55 L614.46,759.36 L616.64,759.14 L618.81,758.89 L620.98,758.63 L623.15,758.34 L625.31,758.02 L627.47,757.69 L629.63,757.33 L631.78,756.95 L633.93,756.55 L636.07,756.13 L638.21,755.68 L640.34,755.22 L642.47,754.73 L644.59,754.22 L646.70,753.69 L648.81,753.13 L650.92,752.56 L653.01,751.97 L655.10,751.35 L657.18,750.72 L659.26,750.06 L661.33,749.39 L663.39,748.69 L665.44,747.98 L667.49,747.25 L669.52,746.50 L671.55,745.72 L673.58,744.94 L675.59,744.13 L677.59,743.30 L679.59,742.46 L681.58,741.60 L683.56,740.72 L685.53,739.82 L687.49,738.91 L689.44,737.98 L691.38,737.03 L693.31,736.07 L695.24,735.09 L697.15,734.09 L699.06,733.08 L700.95,732.05 L702.84,731.01 L704.71,729.95 L706.58,728.88 L708.44,727.80 L710.28,726.70 L712.12,725.58 L713.95,724.45 L715.77,723.31 L717.58,722.15 L719.37,720.98 L721.16,719.80 L722.94,718.60 L724.71,717.39 L726.47,716.17 L728.21,714.94 L729.95,713.69 L731.68,712.43 L733.40,711.16 L735.11,709.88 L736.81,708.59 L738.49,707.28 L740.17,705.96 L741.84,704.63 L743.50,703.29 L745.15,701.94 L746.79,700.58 L748.42,699.20 L750.04,697.82 L751.65,696.42 L753.25,695.02 L754.84,693.60 L756.42,692.17 L757.99,690.74 L759.54,689.29 L761.09,687.83 L762.63,686.36 L764.16,684.88 L765.68,683.39 L767.19,681.89 L768.69,680.38 L770.18,678.86 L771.66,677.33 L773.13,675.79 L774.59,674.24 L776.04,672.69 L777.47,671.12 L778.90,669.54 L780.32,667.95 L781.72,666.35 L783.12,664.74 L784.50,663.12 L785.88,661.49 L787.24,659.85 L788.59,658.20 L789.93,656.54 L791.26,654.87 L792.58,653.19 L793.89,651.51 L795.18,649.81 L796.46,648.10 L797.73,646.38 L798.99,644.65 L800.24,642.91 L801.47,641.17 L802.69,639.41 L803.90,637.64 L805.10,635.86 L806.28,634.07 L807.45,632.27 L808.61,630.47 L809.75,628.65 L810.88,626.82 L812.00,624.98 L813.10,623.14 L814.18,621.28 L815.25,619.41 L816.31,617.54 L817.35,615.65 L818.38,613.76 L819.39,611.85 L820.39,609.94 L821.37,608.01 L822.33,606.08 L823.28,604.14 L824.21,602.19 L825.12,600.23 L826.02,598.26 L826.90,596.28 L827.76,594.29 L828.60,592.29 L829.43,590.29 L830.24,588.28 L831.02,586.25 L831.80,584.22 L832.55,582.19 L833.28,580.14 L833.99,578.09 L834.69,576.03 L835.36,573.96 L836.02,571.88 L836.65,569.80 L837.27,567.71 L837.86,565.62 L838.43,563.51 L838.99,561.40 L839.52,559.29 L840.03,557.17 L840.52,555.04 L840.98,552.91 L841.43,550.77 L841.85,548.63 L842.25,546.48 L842.63,544.33 L842.99,542.17 L843.32,540.01 L843.64,537.85 L843.93,535.68 L844.19,533.51 L844.44,531.34 L844.66,529.16 L844.85,526.99 L845.03,524.80 L845.18,522.62 L845.31,520.44 L845.41,518.25 L845.49,516.06 L845.55,513.88 L845.59,511.69 L845.60,509.50 Z"/><clipPath id="ringc2"><path fill-rule="evenodd" d="M917.70,509.50 L917.69,512.32 L917.64,515.14 L917.57,517.95 L917.47,520.77 L917.34,523.58 L917.18,526.40 L916.99,529.21 L916.77,532.01 L916.53,534.82 L916.25,537.62 L915.95,540.42 L915.62,543.22 L915.26,546.01 L914.87,548.80 L914.46,551.58 L914.02,554.36 L913.54,557.14 L913.05,559.91 L912.52,562.67 L911.96,565.42 L911.38,568.18 L910.78,570.92 L910.14,573.66 L909.48,576.39 L908.79,579.11 L908.08,581.83 L907.34,584.53 L906.57,587.23 L905.78,589.92 L904.96,592.61 L904.12,595.28 L903.25,597.95 L902.36,600.60 L901.44,603.25 L900.50,605.89 L899.53,608.51 L898.54,611.13 L897.53,613.74 L896.49,616.33 L895.43,618.92 L894.35,621.50 L893.24,624.06 L892.12,626.62 L890.97,629.16 L889.79,631.69 L888.60,634.21 L887.39,636.72 L886.15,639.22 L884.89,641.70 L883.62,644.18 L882.32,646.64 L881.00,649.09 L879.66,651.53 L878.31,653.95 L876.93,656.37 L875.53,658.77 L874.12,661.16 L872.69,663.53 L871.23,665.90 L869.76,668.25 L868.27,670.59 L866.77,672.91 L865.24,675.23 L863.70,677.53 L862.14,679.82 L860.57,682.09 L858.97,684.35 L857.36,686.60 L855.74,688.84 L854.10,691.06 L852.44,693.27 L850.76,695.47 L849.07,697.65 L847.37,699.82 L845.64,701.98 L843.91,704.12 L842.15,706.25 L840.39,708.37 L838.60,710.48 L836.81,712.57 L834.99,714.65 L833.17,716.71 L831.33,718.76 L829.47,720.80 L827.60,722.82 L825.71,724.83 L823.81,726.83 L821.90,728.81 L819.97,730.78 L818.03,732.73 L816.08,734.67 L814.11,736.60 L812.13,738.51 L810.13,740.41 L808.12,742.30 L806.10,744.17 L804.06,746.03 L802.01,747.87 L799.95,749.69 L797.87,751.51 L795.78,753.30 L793.67,755.09 L791.55,756.85 L789.42,758.61 L787.28,760.34 L785.12,762.07 L782.95,763.77 L780.77,765.46 L778.57,767.14 L776.36,768.80 L774.14,770.44 L771.90,772.06 L769.65,773.67 L767.39,775.27 L765.12,776.84 L762.83,778.40 L760.53,779.94 L758.21,781.47 L755.89,782.97 L753.55,784.46 L751.20,785.93 L748.83,787.39 L746.46,788.82 L744.07,790.23 L741.67,791.63 L739.25,793.01 L736.83,794.36 L734.39,795.70 L731.94,797.02 L729.48,798.32 L727.00,799.59 L724.52,800.85 L722.02,802.09 L719.51,803.30 L716.99,804.49 L714.46,805.67 L711.92,806.82 L709.36,807.94 L706.80,809.05 L704.22,810.13 L701.63,811.19 L699.04,812.23 L696.43,813.24 L693.81,814.23 L691.19,815.20 L688.55,816.14 L685.90,817.06 L683.25,817.95 L680.58,818.82 L677.91,819.66 L675.22,820.48 L672.53,821.27 L669.83,822.04 L667.13,822.78 L664.41,823.49 L661.69,824.18 L658.96,824.84 L656.22,825.48 L653.48,826.08 L650.72,826.66 L647.97,827.22 L645.21,827.75 L642.44,828.24 L639.66,828.72 L636.88,829.16 L634.10,829.57 L631.31,829.96 L628.52,830.32 L625.72,830.65 L622.92,830.95 L620.12,831.23 L617.31,831.47 L614.51,831.69 L611.70,831.88 L608.88,832.04 L606.07,832.17 L603.25,832.27 L600.44,832.34 L597.62,832.39 L594.80,832.40 L591.98,832.39 L589.16,832.36 L586.35,832.31 L583.53,832.24 L580.71,832.15 L577.90,832.03 L575.08,831.90 L572.27,831.75 L569.45,831.57 L566.64,831.38 L563.83,831.16 L561.02,830.93 L558.21,830.67 L555.40,830.39 L552.59,830.10 L549.79,829.78 L546.99,829.44 L544.18,829.08 L541.39,828.69 L538.59,828.29 L535.79,827.86 L533.00,827.42 L530.21,826.95 L527.43,826.46 L524.64,825.95 L521.87,825.42 L519.09,824.86 L516.32,824.28 L513.55,823.68 L510.78,823.06 L508.02,822.42 L505.26,821.75 L502.51,821.07 L499.76,820.35 L497.02,819.62 L494.28,818.86 L491.55,818.08 L488.82,817.28 L486.10,816.45 L483.39,815.61 L480.68,814.73 L477.98,813.84 L475.28,812.92 L472.59,811.97 L469.91,811.01 L467.24,810.02 L464.57,809.00 L461.91,807.97 L459.27,806.90 L456.63,805.82 L453.99,804.71 L451.37,803.57 L448.76,802.41 L446.16,801.23 L443.56,800.02 L440.98,798.79 L438.41,797.54 L435.85,796.25 L433.30,794.95 L430.76,793.62 L428.24,792.27 L425.72,790.89 L423.22,789.49 L420.74,788.06 L418.26,786.61 L415.80,785.14 L413.35,783.64 L410.92,782.11 L408.50,780.57 L406.10,779.00 L403.71,777.40 L401.34,775.78 L398.98,774.14 L396.64,772.47 L394.31,770.78 L392.00,769.07 L389.71,767.33 L387.44,765.57 L385.18,763.79 L382.94,761.98 L380.72,760.15 L378.52,758.30 L376.34,756.43 L374.17,754.53 L372.03,752.62 L369.90,750.68 L367.79,748.71 L365.71,746.73 L363.64,744.73 L361.60,742.70 L359.57,740.66 L357.57,738.59 L355.59,736.51 L353.62,734.40 L351.68,732.27 L349.77,730.13 L347.87,727.96 L346.00,725.78 L344.15,723.58 L342.32,721.36 L340.51,719.12 L338.73,716.86 L336.97,714.59 L335.23,712.30 L333.52,709.99 L331.83,707.66 L330.16,705.32 L328.52,702.96 L326.90,700.59 L325.30,698.20 L323.73,695.80 L322.19,693.38 L320.66,690.95 L319.16,688.50 L317.69,686.04 L316.24,683.56 L314.81,681.08 L313.41,678.58 L312.03,676.06 L310.68,673.54 L309.35,671.00 L308.05,668.45 L306.76,665.89 L305.51,663.32 L304.28,660.74 L303.07,658.14 L301.89,655.54 L300.73,652.93 L299.59,650.31 L298.48,647.67 L297.40,645.03 L296.33,642.39 L295.30,639.73 L294.28,637.06 L293.29,634.39 L292.33,631.71 L291.38,629.02 L290.46,626.32 L289.57,623.62 L288.69,620.91 L287.85,618.20 L287.02,615.48 L286.22,612.75 L285.44,610.02 L284.68,607.28 L283.95,604.54 L283.23,601.79 L282.55,599.04 L281.88,596.28 L281.24,593.52 L280.62,590.75 L280.02,587.98 L279.44,585.21 L278.88,582.43 L278.35,579.66 L277.84,576.87 L277.35,574.09 L276.88,571.30 L276.44,568.51 L276.01,565.71 L275.61,562.91 L275.22,560.12 L274.86,557.31 L274.52,554.51 L274.20,551.71 L273.91,548.90 L273.63,546.09 L273.37,543.28 L273.14,540.47 L272.92,537.66 L272.73,534.85 L272.55,532.03 L272.40,529.22 L272.27,526.40 L272.15,523.59 L272.06,520.77 L271.99,517.95 L271.94,515.14 L271.91,512.32 L271.90,509.50 L271.91,506.68 L271.93,503.86 L271.98,501.05 L272.04,498.23 L272.12,495.41 L272.21,492.59 L272.32,489.78 L272.45,486.96 L272.60,484.14 L272.77,481.33 L272.95,478.51 L273.15,475.69 L273.37,472.88 L273.61,470.06 L273.87,467.25 L274.14,464.43 L274.43,461.62 L274.74,458.81 L275.07,456.00 L275.42,453.19 L275.79,450.38 L276.18,447.57 L276.59,444.76 L277.01,441.95 L277.46,439.15 L277.93,436.34 L278.42,433.54 L278.93,430.74 L279.45,427.95 L280.00,425.15 L280.58,422.36 L281.17,419.57 L281.78,416.78 L282.42,414.00 L283.08,411.21 L283.76,408.44 L284.46,405.66 L285.19,402.89 L285.94,400.13 L286.71,397.37 L287.51,394.61 L288.33,391.86 L289.18,389.11 L290.04,386.37 L290.94,383.64 L291.85,380.91 L292.80,378.18 L293.76,375.47 L294.75,372.76 L295.77,370.06 L296.81,367.37 L297.88,364.68 L298.98,362.01 L300.10,359.34 L301.24,356.68 L302.41,354.04 L303.61,351.40 L304.84,348.77 L306.09,346.15 L307.37,343.55 L308.67,340.96 L310.00,338.38 L311.36,335.81 L312.74,333.25 L314.16,330.71 L315.59,328.18 L317.06,325.67 L318.55,323.17 L320.07,320.68 L321.62,318.21 L323.19,315.76 L324.79,313.32 L326.41,310.90 L328.07,308.50 L329.74,306.12 L331.45,303.75 L333.18,301.40 L334.94,299.07 L336.72,296.76 L338.53,294.46 L340.36,292.19 L342.22,289.94 L344.11,287.71 L346.02,285.50 L347.95,283.31 L349.91,281.14 L351.90,278.99 L353.90,276.87 L355.94,274.77 L357.99,272.69 L360.07,270.64 L362.17,268.60 L364.29,266.60 L366.44,264.61 L368.61,262.65 L370.80,260.72 L373.01,258.81 L375.24,256.92 L377.49,255.06 L379.76,253.23 L382.06,251.42 L384.37,249.64 L386.70,247.88 L389.05,246.15 L391.42,244.44 L393.80,242.77 L396.20,241.11 L398.62,239.49 L401.06,237.89 L403.51,236.32 L405.98,234.77 L408.47,233.25 L410.97,231.76 L413.48,230.29 L416.01,228.86 L418.55,227.44 L421.11,226.06 L423.68,224.70 L426.26,223.37 L428.85,222.07 L431.45,220.79 L434.07,219.54 L436.70,218.31 L439.34,217.11 L441.98,215.94 L444.64,214.80 L447.31,213.68 L449.98,212.58 L452.67,211.51 L455.36,210.47 L458.06,209.45 L460.77,208.46 L463.48,207.50 L466.21,206.55 L468.94,205.64 L471.67,204.74 L474.41,203.88 L477.16,203.03 L479.91,202.21 L482.67,201.41 L485.43,200.64 L488.19,199.89 L490.96,199.16 L493.74,198.46 L496.51,197.78 L499.30,197.12 L502.08,196.48 L504.87,195.87 L507.66,195.28 L510.45,194.70 L513.25,194.15 L516.04,193.63 L518.84,193.12 L521.64,192.63 L524.45,192.16 L527.25,191.71 L530.06,191.29 L532.87,190.88 L535.68,190.49 L538.49,190.12 L541.30,189.77 L544.11,189.44 L546.92,189.13 L549.73,188.84 L552.55,188.57 L555.36,188.31 L558.18,188.07 L560.99,187.85 L563.81,187.65 L566.63,187.47 L569.44,187.30 L572.26,187.15 L575.08,187.02 L577.89,186.91 L580.71,186.82 L583.53,186.74 L586.35,186.68 L589.16,186.63 L591.98,186.61 L594.80,186.60 L597.62,186.61 L600.44,186.64 L603.25,186.68 L606.07,186.74 L608.89,186.82 L611.71,186.92 L614.52,187.04 L617.34,187.17 L620.16,187.32 L622.97,187.50 L625.79,187.68 L628.60,187.89 L631.42,188.12 L634.23,188.36 L637.04,188.63 L639.86,188.91 L642.67,189.21 L645.48,189.53 L648.29,189.87 L651.10,190.23 L653.90,190.61 L656.71,191.00 L659.51,191.42 L662.32,191.86 L665.12,192.32 L667.92,192.80 L670.71,193.30 L673.51,193.82 L676.30,194.36 L679.09,194.92 L681.88,195.51 L684.66,196.11 L687.44,196.74 L690.22,197.39 L693.00,198.06 L695.77,198.76 L698.53,199.47 L701.30,200.21 L704.05,200.98 L706.81,201.76 L709.56,202.57 L712.30,203.41 L715.04,204.26 L717.77,205.15 L720.49,206.05 L723.21,206.98 L725.92,207.94 L728.63,208.92 L731.33,209.92 L734.02,210.95 L736.70,212.00 L739.37,213.08 L742.04,214.19 L744.69,215.32 L747.34,216.48 L749.97,217.66 L752.60,218.87 L755.22,220.10 L757.82,221.36 L760.41,222.65 L762.99,223.96 L765.56,225.30 L768.12,226.67 L770.66,228.06 L773.19,229.48 L775.71,230.92 L778.21,232.40 L780.70,233.89 L783.17,235.42 L785.63,236.97 L788.07,238.54 L790.50,240.15 L792.91,241.77 L795.30,243.43 L797.67,245.11 L800.03,246.82 L802.37,248.55 L804.69,250.31 L806.99,252.09 L809.28,253.90 L811.54,255.73 L813.78,257.59 L816.01,259.47 L818.21,261.38 L820.39,263.31 L822.55,265.27 L824.69,267.25 L826.81,269.25 L828.90,271.28 L830.97,273.33 L833.02,275.40 L835.05,277.49 L837.05,279.61 L839.03,281.75 L840.99,283.91 L842.92,286.09 L844.83,288.29 L846.71,290.52 L848.57,292.76 L850.40,295.02 L852.21,297.31 L853.99,299.61 L855.75,301.93 L857.48,304.27 L859.19,306.63 L860.87,309.00 L862.53,311.39 L864.15,313.80 L865.76,316.23 L867.33,318.67 L868.88,321.13 L870.41,323.60 L871.90,326.09 L873.38,328.59 L874.82,331.11 L876.24,333.64 L877.63,336.18 L879.00,338.74 L880.34,341.31 L881.65,343.89 L882.94,346.48 L884.20,349.08 L885.43,351.70 L886.64,354.33 L887.82,356.96 L888.98,359.61 L890.11,362.26 L891.22,364.93 L892.30,367.60 L893.35,370.28 L894.38,372.97 L895.38,375.67 L896.36,378.38 L897.32,381.09 L898.25,383.81 L899.15,386.53 L900.04,389.26 L900.89,392.00 L901.73,394.74 L902.54,397.49 L903.32,400.25 L904.09,403.00 L904.83,405.77 L905.54,408.53 L906.24,411.30 L906.91,414.08 L907.56,416.86 L908.19,419.64 L908.79,422.42 L909.38,425.21 L909.94,428.00 L910.48,430.79 L911.00,433.59 L911.50,436.38 L911.98,439.18 L912.44,441.98 L912.88,444.79 L913.30,447.59 L913.69,450.40 L914.07,453.20 L914.43,456.01 L914.77,458.82 L915.09,461.63 L915.39,464.44 L915.67,467.26 L915.94,470.07 L916.18,472.88 L916.41,475.70 L916.62,478.51 L916.80,481.33 L916.98,484.14 L917.13,486.96 L917.26,489.78 L917.38,492.59 L917.48,495.41 L917.56,498.23 L917.62,501.05 L917.66,503.86 L917.69,506.68 Z M845.59,507.31 L845.58,505.12 L845.54,502.93 L845.50,500.75 L845.45,498.56 L845.38,496.37 L845.30,494.18 L845.21,491.99 L845.10,489.80 L844.98,487.61 L844.85,485.42 L844.71,483.23 L844.55,481.04 L844.38,478.86 L844.20,476.67 L844.00,474.48 L843.79,472.29 L843.57,470.10 L843.33,467.91 L843.08,465.72 L842.81,463.53 L842.53,461.35 L842.24,459.16 L841.93,456.97 L841.61,454.78 L841.27,452.60 L840.91,450.41 L840.55,448.23 L840.16,446.05 L839.76,443.86 L839.34,441.68 L838.91,439.50 L838.46,437.33 L837.99,435.15 L837.51,432.97 L837.01,430.80 L836.49,428.63 L835.95,426.47 L835.40,424.30 L834.82,422.14 L834.23,419.98 L833.62,417.82 L833.00,415.67 L832.35,413.52 L831.68,411.38 L831.00,409.24 L830.29,407.10 L829.57,404.97 L828.82,402.85 L828.06,400.73 L827.27,398.62 L826.47,396.51 L825.64,394.41 L824.80,392.31 L823.93,390.22 L823.04,388.14 L822.13,386.07 L821.20,384.00 L820.25,381.95 L819.27,379.90 L818.28,377.86 L817.26,375.83 L816.22,373.81 L815.16,371.80 L814.08,369.80 L812.98,367.81 L811.85,365.84 L810.70,363.87 L809.54,361.92 L808.34,359.97 L807.13,358.05 L805.90,356.13 L804.64,354.23 L803.36,352.34 L802.06,350.46 L800.74,348.60 L799.40,346.75 L798.04,344.92 L796.65,343.11 L795.24,341.31 L793.82,339.52 L792.37,337.75 L790.90,336.00 L789.41,334.27 L787.90,332.55 L786.37,330.85 L784.83,329.17 L783.26,327.51 L781.67,325.86 L780.06,324.24 L778.44,322.63 L776.79,321.04 L775.13,319.47 L773.45,317.93 L771.75,316.40 L770.03,314.89 L768.30,313.40 L766.55,311.93 L764.78,310.48 L762.99,309.06 L761.19,307.65 L759.38,306.26 L757.55,304.90 L755.70,303.56 L753.84,302.24 L751.96,300.94 L750.07,299.66 L748.17,298.40 L746.25,297.17 L744.33,295.96 L742.38,294.76 L740.43,293.60 L738.46,292.45 L736.49,291.32 L734.50,290.22 L732.50,289.14 L730.49,288.08 L728.47,287.04 L726.44,286.02 L724.40,285.03 L722.35,284.05 L720.30,283.10 L718.23,282.17 L716.16,281.26 L714.08,280.37 L711.99,279.50 L709.89,278.66 L707.79,277.83 L705.68,277.03 L703.57,276.24 L701.45,275.48 L699.33,274.73 L697.20,274.01 L695.06,273.30 L692.92,272.62 L690.78,271.95 L688.63,271.30 L686.48,270.68 L684.32,270.07 L682.16,269.48 L680.00,268.90 L677.83,268.35 L675.67,267.81 L673.50,267.29 L671.33,266.79 L669.15,266.31 L666.97,265.84 L664.80,265.39 L662.62,264.96 L660.44,264.54 L658.25,264.14 L656.07,263.75 L653.89,263.39 L651.70,263.03 L649.52,262.69 L647.33,262.37 L645.14,262.06 L642.95,261.77 L640.77,261.49 L638.58,261.22 L636.39,260.97 L634.20,260.73 L632.01,260.51 L629.82,260.30 L627.63,260.10 L625.44,259.92 L623.26,259.75 L621.07,259.59 L618.88,259.45 L616.69,259.32 L614.50,259.20 L612.31,259.09 L610.12,259.00 L607.93,258.92 L605.74,258.85 L603.55,258.80 L601.37,258.76 L599.18,258.72 L596.99,258.71 L594.80,258.70 L592.61,258.71 L590.42,258.72 L588.23,258.75 L586.05,258.79 L583.86,258.85 L581.67,258.91 L579.48,258.99 L577.29,259.08 L575.10,259.18 L572.91,259.29 L570.72,259.42 L568.53,259.56 L566.34,259.71 L564.15,259.87 L561.96,260.05 L559.77,260.24 L557.58,260.44 L555.39,260.66 L553.20,260.89 L551.01,261.13 L548.81,261.38 L546.62,261.65 L544.43,261.94 L542.24,262.24 L540.05,262.55 L537.86,262.88 L535.67,263.22 L533.49,263.58 L531.30,263.96 L529.11,264.35 L526.93,264.75 L524.74,265.18 L522.56,265.62 L520.38,266.07 L518.20,266.54 L516.02,267.03 L513.84,267.54 L511.67,268.06 L509.49,268.61 L507.33,269.17 L505.16,269.74 L503.00,270.34 L500.84,270.96 L498.68,271.59 L496.53,272.25 L494.38,272.92 L492.23,273.62 L490.09,274.33 L487.96,275.06 L485.83,275.82 L483.71,276.59 L481.59,277.39 L479.48,278.20 L477.37,279.04 L475.28,279.90 L473.18,280.77 L471.10,281.68 L469.03,282.60 L466.96,283.54 L464.90,284.51 L462.85,285.49 L460.81,286.50 L458.78,287.53 L456.76,288.59 L454.75,289.66 L452.75,290.76 L450.76,291.88 L448.79,293.02 L446.82,294.19 L444.87,295.38 L442.93,296.59 L441.00,297.82 L439.09,299.07 L437.19,300.35 L435.31,301.64 L433.44,302.96 L431.58,304.31 L429.74,305.67 L427.92,307.05 L426.11,308.46 L424.32,309.89 L422.54,311.34 L420.78,312.81 L419.04,314.30 L417.32,315.81 L415.61,317.34 L413.92,318.90 L412.25,320.47 L410.60,322.06 L408.97,323.67 L407.36,325.30 L405.77,326.95 L404.20,328.62 L402.64,330.31 L401.11,332.02 L399.60,333.74 L398.11,335.48 L396.64,337.24 L395.19,339.02 L393.76,340.81 L392.35,342.62 L390.97,344.44 L389.61,346.28 L388.26,348.14 L386.94,350.01 L385.65,351.89 L384.37,353.79 L383.12,355.70 L381.89,357.63 L380.68,359.57 L379.49,361.52 L378.32,363.49 L377.18,365.46 L376.06,367.45 L374.96,369.45 L373.89,371.46 L372.83,373.48 L371.80,375.51 L370.79,377.55 L369.81,379.60 L368.84,381.66 L367.90,383.73 L366.98,385.80 L366.07,387.88 L365.20,389.98 L364.34,392.07 L363.50,394.18 L362.69,396.29 L361.89,398.41 L361.12,400.53 L360.36,402.66 L359.63,404.79 L358.92,406.93 L358.22,409.08 L357.55,411.23 L356.89,413.38 L356.26,415.54 L355.64,417.70 L355.04,419.86 L354.47,422.03 L353.91,424.19 L353.36,426.37 L352.84,428.54 L352.33,430.72 L351.84,432.90 L351.37,435.08 L350.92,437.26 L350.48,439.44 L350.05,441.63 L349.65,443.81 L349.26,446.00 L348.88,448.19 L348.52,450.37 L348.18,452.56 L347.85,454.75 L347.54,456.94 L347.24,459.13 L346.95,461.32 L346.68,463.51 L346.43,465.71 L346.19,467.90 L345.96,470.09 L345.74,472.28 L345.54,474.47 L345.35,476.66 L345.17,478.85 L345.01,481.04 L344.86,483.23 L344.72,485.42 L344.59,487.61 L344.48,489.80 L344.38,491.99 L344.29,494.18 L344.21,496.37 L344.15,498.56 L344.09,500.75 L344.05,502.93 L344.02,505.12 L344.01,507.31 L344.00,509.50 L344.01,511.69 L344.03,513.88 L344.07,516.07 L344.12,518.25 L344.18,520.44 L344.27,522.63 L344.36,524.82 L344.47,527.00 L344.60,529.19 L344.74,531.38 L344.89,533.56 L345.06,535.75 L345.25,537.93 L345.45,540.12 L345.67,542.30 L345.90,544.48 L346.15,546.66 L346.41,548.84 L346.69,551.02 L346.98,553.20 L347.29,555.37 L347.62,557.55 L347.96,559.72 L348.32,561.89 L348.69,564.06 L349.08,566.23 L349.49,568.39 L349.91,570.56 L350.35,572.72 L350.81,574.88 L351.28,577.03 L351.77,579.19 L352.28,581.34 L352.81,583.49 L353.35,585.63 L353.91,587.77 L354.49,589.91 L355.08,592.04 L355.70,594.17 L356.33,596.30 L356.98,598.42 L357.65,600.53 L358.34,602.65 L359.04,604.75 L359.77,606.85 L360.51,608.95 L361.27,611.04 L362.05,613.13 L362.85,615.21 L363.67,617.28 L364.51,619.34 L365.36,621.40 L366.24,623.46 L367.14,625.50 L368.05,627.54 L368.99,629.57 L369.94,631.59 L370.92,633.60 L371.91,635.60 L372.92,637.60 L373.96,639.59 L375.01,641.56 L376.08,643.53 L377.18,645.49 L378.29,647.43 L379.42,649.37 L380.57,651.29 L381.75,653.21 L382.94,655.11 L384.15,657.00 L385.38,658.88 L386.63,660.74 L387.90,662.60 L389.19,664.44 L390.50,666.27 L391.83,668.08 L393.17,669.88 L394.54,671.67 L395.92,673.44 L397.33,675.20 L398.75,676.94 L400.19,678.67 L401.65,680.39 L403.13,682.08 L404.62,683.77 L406.14,685.43 L407.67,687.08 L409.22,688.72 L410.78,690.33 L412.37,691.93 L413.97,693.52 L415.58,695.08 L417.22,696.63 L418.87,698.16 L420.53,699.68 L422.22,701.17 L423.91,702.65 L425.63,704.11 L427.36,705.55 L429.10,706.97 L430.86,708.38 L432.63,709.76 L434.42,711.13 L436.22,712.47 L438.03,713.80 L439.86,715.11 L441.70,716.40 L443.56,717.67 L445.42,718.92 L447.30,720.15 L449.19,721.36 L451.09,722.55 L453.01,723.73 L454.93,724.88 L456.87,726.01 L458.81,727.12 L460.77,728.22 L462.74,729.29 L464.71,730.34 L466.70,731.38 L468.70,732.39 L470.70,733.38 L472.71,734.36 L474.73,735.31 L476.76,736.25 L478.80,737.16 L480.84,738.06 L482.90,738.94 L484.96,739.79 L487.02,740.63 L489.09,741.45 L491.17,742.25 L493.26,743.03 L495.35,743.79 L497.45,744.53 L499.55,745.26 L501.65,745.96 L503.77,746.65 L505.88,747.32 L508.00,747.97 L510.13,748.60 L512.26,749.22 L514.39,749.81 L516.53,750.39 L518.67,750.95 L520.81,751.49 L522.96,752.02 L525.11,752.53 L527.27,753.02 L529.42,753.49 L531.58,753.95 L533.74,754.39 L535.91,754.81 L538.07,755.22 L540.24,755.61 L542.41,755.98 L544.58,756.34 L546.75,756.68 L548.93,757.01 L551.10,757.32 L553.28,757.61 L555.46,757.89 L557.64,758.15 L559.82,758.40 L562.00,758.63 L564.18,758.85 L566.37,759.05 L568.55,759.24 L570.74,759.41 L572.92,759.56 L575.11,759.70 L577.30,759.83 L579.48,759.94 L581.67,760.03 L583.86,760.12 L586.05,760.18 L588.23,760.23 L590.42,760.27 L592.61,760.29 L594.80,760.30 L596.99,760.29 L599.18,760.25 L601.36,760.19 L603.55,760.11 L605.74,760.01 L607.92,759.88 L610.10,759.73 L612.29,759.55 L614.46,759.36 L616.64,759.14 L618.81,758.89 L620.98,758.63 L623.15,758.34 L625.31,758.02 L627.47,757.69 L629.63,757.33 L631.78,756.95 L633.93,756.55 L636.07,756.13 L638.21,755.68 L640.34,755.22 L642.47,754.73 L644.59,754.22 L646.70,753.69 L648.81,753.13 L650.92,752.56 L653.01,751.97 L655.10,751.35 L657.18,750.72 L659.26,750.06 L661.33,749.39 L663.39,748.69 L665.44,747.98 L667.49,747.25 L669.52,746.50 L671.55,745.72 L673.58,744.94 L675.59,744.13 L677.59,743.30 L679.59,742.46 L681.58,741.60 L683.56,740.72 L685.53,739.82 L687.49,738.91 L689.44,737.98 L691.38,737.03 L693.31,736.07 L695.24,735.09 L697.15,734.09 L699.06,733.08 L700.95,732.05 L702.84,731.01 L704.71,729.95 L706.58,728.88 L708.44,727.80 L710.28,726.70 L712.12,725.58 L713.95,724.45 L715.77,723.31 L717.58,722.15 L719.37,720.98 L721.16,719.80 L722.94,718.60 L724.71,717.39 L726.47,716.17 L728.21,714.94 L729.95,713.69 L731.68,712.43 L733.40,711.16 L735.11,709.88 L736.81,708.59 L738.49,707.28 L740.17,705.96 L741.84,704.63 L743.50,703.29 L745.15,701.94 L746.79,700.58 L748.42,699.20 L750.04,697.82 L751.65,696.42 L753.25,695.02 L754.84,693.60 L756.42,692.17 L757.99,690.74 L759.54,689.29 L761.09,687.83 L762.63,686.36 L764.16,684.88 L765.68,683.39 L767.19,681.89 L768.69,680.38 L770.18,678.86 L771.66,677.33 L773.13,675.79 L774.59,674.24 L776.04,672.69 L777.47,671.12 L778.90,669.54 L780.32,667.95 L781.72,666.35 L783.12,664.74 L784.50,663.12 L785.88,661.49 L787.24,659.85 L788.59,658.20 L789.93,656.54 L791.26,654.87 L792.58,653.19 L793.89,651.51 L795.18,649.81 L796.46,648.10 L797.73,646.38 L798.99,644.65 L800.24,642.91 L801.47,641.17 L802.69,639.41 L803.90,637.64 L805.10,635.86 L806.28,634.07 L807.45,632.27 L808.61,630.47 L809.75,628.65 L810.88,626.82 L812.00,624.98 L813.10,623.14 L814.18,621.28 L815.25,619.41 L816.31,617.54 L817.35,615.65 L818.38,613.76 L819.39,611.85 L820.39,609.94 L821.37,608.01 L822.33,606.08 L823.28,604.14 L824.21,602.19 L825.12,600.23 L826.02,598.26 L826.90,596.28 L827.76,594.29 L828.60,592.29 L829.43,590.29 L830.24,588.28 L831.02,586.25 L831.80,584.22 L832.55,582.19 L833.28,580.14 L833.99,578.09 L834.69,576.03 L835.36,573.96 L836.02,571.88 L836.65,569.80 L837.27,567.71 L837.86,565.62 L838.43,563.51 L838.99,561.40 L839.52,559.29 L840.03,557.17 L840.52,555.04 L840.98,552.91 L841.43,550.77 L841.85,548.63 L842.25,546.48 L842.63,544.33 L842.99,542.17 L843.32,540.01 L843.64,537.85 L843.93,535.68 L844.19,533.51 L844.44,531.34 L844.66,529.16 L844.85,526.99 L845.03,524.80 L845.18,522.62 L845.31,520.44 L845.41,518.25 L845.49,516.06 L845.55,513.88 L845.59,511.69 L845.60,509.50 Z"/></clipPath><g clip-path="url(#spk)"><g clip-path="url(#ringc2)"><path d="M438.7,257.5 L381.6,251.8 L454.8,210.7 Z" fill="#838383" stroke="#838383" stroke-width="0.6"/><path d="M438.7,257.5 L427.6,307.3 L381.6,251.8 Z" fill="#7e7e7e" stroke="#7e7e7e" stroke-width="0.6"/><path d="M438.7,257.5 L485.4,276.0 L427.6,307.3 Z" fill="#9e9e9e" stroke="#9e9e9e" stroke-width="0.6"/><path d="M438.7,257.5 L454.8,210.7 L485.4,276.0 Z" fill="#bcbcbc" stroke="#bcbcbc" stroke-width="0.6"/><path d="M509.3,231.7 L454.8,210.7 L536.8,190.3 Z" fill="#838383" stroke="#838383" stroke-width="0.6"/><path d="M509.3,231.7 L485.4,276.0 L454.8,210.7 Z" fill="#7e7e7e" stroke="#7e7e7e" stroke-width="0.6"/><path d="M509.3,231.7 L549.7,261.3 L485.4,276.0 Z" fill="#9e9e9e" stroke="#9e9e9e" stroke-width="0.6"/><path d="M509.3,231.7 L536.8,190.3 L549.7,261.3 Z" fill="#bcbcbc" stroke="#bcbcbc" stroke-width="0.6"/><path d="M582.2,222.8 L536.8,190.3 L617.9,187.2 Z" fill="#838383" stroke="#838383" stroke-width="0.6"/><path d="M582.2,222.8 L549.7,261.3 L536.8,190.3 Z" fill="#7e7e7e" stroke="#7e7e7e" stroke-width="0.6"/><path d="M582.2,222.8 L612.7,259.1 L549.7,261.3 Z" fill="#999999" stroke="#999999" stroke-width="0.6"/><path d="M582.2,222.8 L617.9,187.2 L612.7,259.1 Z" fill="#c1c1c1" stroke="#c1c1c1" stroke-width="0.6"/><path d="M654.5,227.1 L617.9,187.2 L699.1,199.6 Z" fill="#838383" stroke="#838383" stroke-width="0.6"/><path d="M654.5,227.1 L612.7,259.1 L617.9,187.2 Z" fill="#7e7e7e" stroke="#7e7e7e" stroke-width="0.6"/><path d="M654.5,227.1 L676.1,267.9 L612.7,259.1 Z" fill="#939393" stroke="#939393" stroke-width="0.6"/><path d="M654.5,227.1 L699.1,199.6 L676.1,267.9 Z" fill="#c8c8c8" stroke="#c8c8c8" stroke-width="0.6"/><path d="M725.6,246.3 L699.1,199.6 L776.2,231.2 Z" fill="#838383" stroke="#838383" stroke-width="0.6"/><path d="M725.6,246.3 L676.1,267.9 L699.1,199.6 Z" fill="#7e7e7e" stroke="#7e7e7e" stroke-width="0.6"/><path d="M725.6,246.3 L736.9,291.5 L676.1,267.9 Z" fill="#8e8e8e" stroke="#8e8e8e" stroke-width="0.6"/><path d="M725.6,246.3 L776.2,231.2 L736.9,291.5 Z" fill="#cecece" stroke="#cecece" stroke-width="0.6"/><path d="M789.0,283.8 L776.2,231.2 L839.8,282.6 Z" fill="#838383" stroke="#838383" stroke-width="0.6"/><path d="M789.0,283.8 L736.9,291.5 L776.2,231.2 Z" fill="#7e7e7e" stroke="#7e7e7e" stroke-width="0.6"/><path d="M789.0,283.8 L787.0,331.5 L736.9,291.5 Z" fill="#8a8a8a" stroke="#8a8a8a" stroke-width="0.6"/><path d="M789.0,283.8 L839.8,282.6 L787.0,331.5 Z" fill="#d4d4d4" stroke="#d4d4d4" stroke-width="0.6"/><path d="M837.0,338.0 L839.8,282.6 L884.4,349.6 Z" fill="#838383" stroke="#838383" stroke-width="0.6"/><path d="M837.0,338.0 L787.0,331.5 L839.8,282.6 Z" fill="#7e7e7e" stroke="#7e7e7e" stroke-width="0.6"/><path d="M837.0,338.0 L821.4,384.4 L787.0,331.5 Z" fill="#8a8a8a" stroke="#8a8a8a" stroke-width="0.6"/><path d="M837.0,338.0 L884.4,349.6 L821.4,384.4 Z" fill="#d4d4d4" stroke="#d4d4d4" stroke-width="0.6"/><path d="M866.8,403.5 L884.4,349.6 L909.6,426.3 Z" fill="#838383" stroke="#838383" stroke-width="0.6"/><path d="M866.8,403.5 L821.4,384.4 L884.4,349.6 Z" fill="#7e7e7e" stroke="#7e7e7e" stroke-width="0.6"/><path d="M866.8,403.5 L839.9,444.7 L821.4,384.4 Z" fill="#8a8a8a" stroke="#8a8a8a" stroke-width="0.6"/><path d="M866.8,403.5 L909.6,426.3 L839.9,444.7 Z" fill="#d4d4d4" stroke="#d4d4d4" stroke-width="0.6"/><path d="M880.2,475.4 L909.6,426.3 L917.7,509.5 Z" fill="#dcdcdc" stroke="#dcdcdc" stroke-width="0.6"/><path d="M880.2,475.4 L917.7,509.5 L845.6,509.5 Z" fill="#939393" stroke="#939393" stroke-width="0.6"/><path d="M880.2,475.4 L845.6,509.5 L839.9,444.7 Z" fill="#8a8a8a" stroke="#8a8a8a" stroke-width="0.6"/><path d="M880.2,475.4 L839.9,444.7 L909.6,426.3 Z" fill="#a8a8a8" stroke="#a8a8a8" stroke-width="0.6"/><path d="M879.1,544.6 L917.7,509.5 L904.5,594.2 Z" fill="#e2e2e2" stroke="#e2e2e2" stroke-width="0.6"/><path d="M879.1,544.6 L917.7,509.5 L845.6,509.5 Z" fill="#939393" stroke="#939393" stroke-width="0.6"/><path d="M879.1,544.6 L845.6,509.5 L835.0,575.2 Z" fill="#8a8a8a" stroke="#8a8a8a" stroke-width="0.6"/><path d="M879.1,544.6 L835.0,575.2 L904.5,594.2 Z" fill="#a8a8a8" stroke="#a8a8a8" stroke-width="0.6"/><path d="M857.8,615.1 L904.5,594.2 L870.9,666.4 Z" fill="#838383" stroke="#838383" stroke-width="0.6"/><path d="M857.8,615.1 L808.4,630.8 L870.9,666.4 Z" fill="#7e7e7e" stroke="#7e7e7e" stroke-width="0.6"/><path d="M857.8,615.1 L835.0,575.2 L808.4,630.8 Z" fill="#8a8a8a" stroke="#8a8a8a" stroke-width="0.6"/><path d="M857.8,615.1 L904.5,594.2 L835.0,575.2 Z" fill="#d4d4d4" stroke="#d4d4d4" stroke-width="0.6"/><path d="M820.4,675.9 L870.9,666.4 L820.4,730.4 Z" fill="#838383" stroke="#838383" stroke-width="0.6"/><path d="M820.4,675.9 L769.0,680.1 L820.4,730.4 Z" fill="#7e7e7e" stroke="#7e7e7e" stroke-width="0.6"/><path d="M820.4,675.9 L808.4,630.8 L769.0,680.1 Z" fill="#8a8a8a" stroke="#8a8a8a" stroke-width="0.6"/><path d="M820.4,675.9 L870.9,666.4 L808.4,630.8 Z" fill="#d4d4d4" stroke="#d4d4d4" stroke-width="0.6"/><path d="M770.1,727.9 L820.4,730.4 L756.8,782.4 Z" fill="#838383" stroke="#838383" stroke-width="0.6"/><path d="M770.1,727.9 L720.1,720.5 L756.8,782.4 Z" fill="#7e7e7e" stroke="#7e7e7e" stroke-width="0.6"/><path d="M770.1,727.9 L769.0,680.1 L720.1,720.5 Z" fill="#8a8a8a" stroke="#8a8a8a" stroke-width="0.6"/><path d="M770.1,727.9 L820.4,730.4 L769.0,680.1 Z" fill="#d4d4d4" stroke="#d4d4d4" stroke-width="0.6"/><path d="M709.0,768.4 L756.8,782.4 L681.6,818.5 Z" fill="#838383" stroke="#838383" stroke-width="0.6"/><path d="M709.0,768.4 L662.2,749.1 L681.6,818.5 Z" fill="#7e7e7e" stroke="#7e7e7e" stroke-width="0.6"/><path d="M709.0,768.4 L720.1,720.5 L662.2,749.1 Z" fill="#8a8a8a" stroke="#8a8a8a" stroke-width="0.6"/><path d="M709.0,768.4 L756.8,782.4 L720.1,720.5 Z" fill="#d4d4d4" stroke="#d4d4d4" stroke-width="0.6"/><path d="M638.8,792.3 L681.6,818.5 L599.3,832.4 Z" fill="#838383" stroke="#838383" stroke-width="0.6"/><path d="M638.8,792.3 L598.3,760.3 L599.3,832.4 Z" fill="#7e7e7e" stroke="#7e7e7e" stroke-width="0.6"/><path d="M638.8,792.3 L662.2,749.1 L598.3,760.3 Z" fill="#8a8a8a" stroke="#8a8a8a" stroke-width="0.6"/><path d="M638.8,792.3 L681.6,818.5 L662.2,749.1 Z" fill="#d4d4d4" stroke="#d4d4d4" stroke-width="0.6"/><path d="M566.6,795.2 L599.3,832.4 L520.8,825.2 Z" fill="#838383" stroke="#838383" stroke-width="0.6"/><path d="M566.6,795.2 L537.2,755.1 L520.8,825.2 Z" fill="#7e7e7e" stroke="#7e7e7e" stroke-width="0.6"/><path d="M566.6,795.2 L598.3,760.3 L537.2,755.1 Z" fill="#8a8a8a" stroke="#8a8a8a" stroke-width="0.6"/><path d="M566.6,795.2 L599.3,832.4 L598.3,760.3 Z" fill="#d4d4d4" stroke="#d4d4d4" stroke-width="0.6"/><path d="M496.1,781.9 L520.8,825.2 L442.0,799.3 Z" fill="#838383" stroke="#838383" stroke-width="0.6"/><path d="M496.1,781.9 L475.5,735.7 L442.0,799.3 Z" fill="#7e7e7e" stroke="#7e7e7e" stroke-width="0.6"/><path d="M496.1,781.9 L537.2,755.1 L475.5,735.7 Z" fill="#8a8a8a" stroke="#8a8a8a" stroke-width="0.6"/><path d="M496.1,781.9 L520.8,825.2 L537.2,755.1 Z" fill="#d4d4d4" stroke="#d4d4d4" stroke-width="0.6"/><path d="M428.8,750.9 L442.0,799.3 L372.5,753.0 Z" fill="#838383" stroke="#838383" stroke-width="0.6"/><path d="M428.8,750.9 L420.9,700.0 L372.5,753.0 Z" fill="#7e7e7e" stroke="#7e7e7e" stroke-width="0.6"/><path d="M428.8,750.9 L475.5,735.7 L420.9,700.0 Z" fill="#8a8a8a" stroke="#8a8a8a" stroke-width="0.6"/><path d="M428.8,750.9 L442.0,799.3 L475.5,735.7 Z" fill="#d4d4d4" stroke="#d4d4d4" stroke-width="0.6"/><line x1="454.0" y1="208.9" x2="485.8" y2="276.9" stroke="#ffffff" stroke-width="3"/><line x1="536.4" y1="188.4" x2="549.9" y2="262.3" stroke="#ffffff" stroke-width="3"/><line x1="618.0" y1="185.2" x2="612.7" y2="260.1" stroke="#ffffff" stroke-width="3"/><line x1="699.7" y1="197.7" x2="675.8" y2="268.9" stroke="#ffffff" stroke-width="3"/><line x1="777.3" y1="229.5" x2="736.3" y2="292.4" stroke="#ffffff" stroke-width="3"/><line x1="841.3" y1="281.3" x2="786.3" y2="332.2" stroke="#ffffff" stroke-width="3"/><line x1="886.2" y1="348.6" x2="820.5" y2="384.9" stroke="#ffffff" stroke-width="3"/><line x1="911.5" y1="425.8" x2="839.0" y2="445.0" stroke="#ffffff" stroke-width="3"/><line x1="872.7" y1="667.4" x2="807.5" y2="630.3" stroke="#ffffff" stroke-width="3"/><line x1="821.8" y1="731.8" x2="768.3" y2="679.4" stroke="#ffffff" stroke-width="3"/><line x1="757.8" y1="784.1" x2="719.6" y2="719.7" stroke="#ffffff" stroke-width="3"/><line x1="682.2" y1="820.4" x2="661.9" y2="748.2" stroke="#ffffff" stroke-width="3"/><line x1="599.3" y1="834.4" x2="598.3" y2="759.3" stroke="#ffffff" stroke-width="3"/><line x1="520.3" y1="827.1" x2="537.4" y2="754.1" stroke="#ffffff" stroke-width="3"/><line x1="441.1" y1="801.1" x2="476.0" y2="734.8" stroke="#ffffff" stroke-width="3"/><line x1="371.1" y1="754.5" x2="421.5" y2="699.2" stroke="#ffffff" stroke-width="3"/><line x1="904.5" y1="594.2" x2="857.8" y2="615.1" stroke="#e6e6e6" stroke-width="2" stroke-dasharray="2 1.5"/><path d="M907.9,425.6 L908.5,428.4 L909.0,431.2 L909.5,433.9 L910.0,436.7 L910.5,439.5 L911.0,442.3 L911.4,445.1 L911.8,447.9 L912.2,450.7 L912.6,453.5 L913.0,456.3 L913.3,459.1 L913.6,461.9 L913.9,464.7 L914.2,467.5 L914.4,470.3 L914.7,473.1 L914.9,475.9 L915.1,478.7 L915.3,481.5 L915.5,484.3 L915.6,487.1 L915.8,489.9 L915.9,492.7 L916.0,495.5 L916.1,498.3 L916.1,501.1 L916.2,503.9 L916.2,506.7 L916.2,509.5 L916.2,512.3 L916.1,515.1 L916.1,517.9 L916.0,520.7 L915.8,523.5 L915.7,526.3 L915.5,529.1 L915.3,531.9 L915.0,534.7 L914.8,537.5 L914.5,540.3 L914.1,543.1 L913.8,545.8 L913.4,548.6 L913.0,551.4 L912.5,554.2 L912.1,556.9 L911.6,559.7 L911.0,562.4 L910.5,565.2 L909.9,567.9 L909.3,570.6 L908.7,573.4 L908.0,576.1 L907.3,578.8 L906.6,581.5 L905.9,584.2 L905.1,586.9 L904.3,589.5 L903.5,592.2" fill="none" stroke="#f4f4f4" stroke-width="3"/><path d="M472.5,279.5 L474.6,278.7 L476.7,277.8 L478.9,276.9 L481.0,276.1 L483.1,275.3 L485.2,274.5 L487.4,273.8 L489.5,273.0 L491.7,272.3 L493.8,271.6 L496.0,271.0 L498.2,270.3 L500.3,269.7 L502.5,269.0 L504.7,268.4 L506.8,267.9 L509.0,267.3 L511.2,266.7 L513.4,266.2 L515.6,265.7 L517.8,265.2 L520.0,264.7 L522.2,264.3 L524.4,263.8 L526.6,263.4 L528.7,263.0 L530.9,262.6 L533.1,262.2 L535.3,261.9 L537.5,261.5 L539.8,261.2 L542.0,260.9 L544.2,260.6 L546.4,260.3 L548.6,260.0 L550.8,259.7 L553.0,259.5 L555.2,259.3 L557.4,259.1 L559.6,258.9 L561.8,258.7 L564.0,258.5 L566.2,258.3 L568.4,258.2 L570.6,258.0 L572.8,257.9 L575.0,257.8 L577.2,257.7 L579.4,257.6 L581.6,257.5 L583.8,257.4 L586.0,257.4 L588.2,257.4 L590.4,257.3 L592.6,257.3 L594.8,257.3 L597.0,257.3 L599.2,257.3 L601.4,257.4 L603.6,257.4 L605.8,257.5 L608.0,257.5 L610.2,257.6 L612.4,257.7 L614.6,257.8 L616.8,257.9 L619.0,258.1 L621.2,258.2 L623.4,258.4 L625.6,258.5 L627.8,258.7 L630.0,258.9 L632.2,259.1 L634.4,259.3 L636.6,259.6 L638.8,259.8 L641.0,260.1 L643.2,260.4 L645.4,260.7 L647.6,261.0 L649.8,261.3 L652.0,261.7 L654.2,262.0 L656.4,262.4 L658.6,262.8 L660.8,263.2 L663.0,263.6 L665.2,264.0 L667.4,264.5 L669.6,265.0 L671.7,265.5 L673.9,266.0 L676.1,266.5 L678.3,267.0 L680.5,267.6 L682.6,268.2 L684.8,268.8 L687.0,269.4 L689.1,270.0 L691.3,270.7 L693.5,271.3 L695.6,272.0 L697.8,272.7 L699.9,273.5 L702.0,274.2 L704.2,275.0 L706.3,275.8 L708.4,276.6 L710.5,277.4 L712.6,278.3 L714.7,279.1" fill="none" stroke="#cfcfcf" stroke-width="3"/><path d="M559.7,759.6 L557.5,759.3 L555.3,759.1 L553.1,758.8 L550.9,758.5 L548.7,758.2 L546.5,757.9 L544.3,757.5 L542.2,757.2 L540.0,756.8 L537.8,756.4 L535.6,756.0 L533.5,755.6 L531.3,755.1 L529.1,754.7 L526.9,754.2 L524.8,753.7 L522.6,753.2 L520.5,752.6 L518.3,752.1 L516.2,751.5 L514.0,751.0 L511.9,750.4 L509.7,749.7 L507.6,749.1 L505.5,748.4 L503.3,747.8 L501.2,747.1 L499.1,746.4 L497.0,745.6 L494.9,744.9 L492.8,744.1 L490.7,743.3 L488.6,742.5 L486.5,741.7 L484.4,740.9 L482.4,740.0 L480.3,739.1 L478.3,738.2 L476.2,737.3 L474.2,736.4 L472.1,735.4 L470.1,734.4 L468.1,733.4 L466.1,732.4 L464.1,731.4" fill="none" stroke="#c4c4c4" stroke-width="2.5"/></g></g></g><g filter="url(#soft)"><rect x="972.5" y="455" width="144" height="144" rx="13" fill="#3f6e98"/><rect x="975" y="457.5" width="139" height="139" rx="11" fill="#4c7faa"/><path d="M991.0,507.5 C993.0,501.0 997.0,495.0 1002.0,494.6 C1005.0,494.4 1007.5,497.8 1010.0,498.0 C1013.0,498.2 1016.0,496.0 1018.0,493.0 L1018.5,483.5 C1019.0,480.0 1022.0,478.0 1026.0,477.3 L1031.5,476.3 C1034.5,476.0 1036.5,477.5 1037.8,480.5 L1039.0,483.5 C1040.0,485.5 1042.0,486.0 1044.6,486.0 C1047.2,486.0 1049.2,485.5 1050.2,483.5 L1051.4,480.5 C1052.7,477.5 1054.7,476.0 1057.7,476.3 L1063.2,477.3 C1067.2,478.0 1070.2,480.0 1070.7,483.5 L1071.2,493.0 C1073.2,496.0 1076.2,498.2 1079.2,498.0 C1081.7,497.8 1084.2,494.4 1087.2,494.6 C1092.2,495.0 1096.2,501.0 1098.2,507.5 L1092.8,515.9 L1092.8,555.7 C1091.2,561 1086.2,568 1079.3,572.6 C1073.2,575.5 1059.2,578.5 1044.6,578.5 C1030,578.5 1016,575.5 1009.9,572.6 C1003,568 998,561 996.4,555.7 L996.4,515.9 Z" fill="#6bcdf7" stroke="#ffffff" stroke-width="4.1" stroke-linejoin="round"/><path d="M996.4,547.2 L1014.8,547.7 L1014.8,556.7 L1033.7,557.7 L1035.2,549.2 L1044.6,549.2 L1054.0,549.2 L1055.5,557.7 L1074.4,556.7 L1074.4,547.7 L1092.8,547.2" fill="none" stroke="#ffffff" stroke-width="4" stroke-linejoin="round"/><circle cx="1020.3" cy="528.8" r="10.4" fill="#fff"/><circle cx="1020.3" cy="528.8" r="5.9" fill="#565656"/><circle cx="1067.7" cy="528.8" r="10.4" fill="#fff"/><circle cx="1067.7" cy="528.8" r="5.9" fill="#565656"/><ellipse cx="1044" cy="537" rx="5" ry="7" fill="#fff"/></g><g shape-rendering="crispEdges"><line x1="38.5" y1="148" x2="38.5" y2="798" stroke="rgba(255,255,255,0.075)"/><line x1="56.5" y1="148" x2="56.5" y2="798" stroke="rgba(255,255,255,0.075)"/><line x1="74.5" y1="148" x2="74.5" y2="798" stroke="rgba(255,255,255,0.075)"/><line x1="92.5" y1="148" x2="92.5" y2="798" stroke="rgba(255,255,255,0.075)"/><line x1="110.5" y1="148" x2="110.5" y2="798" stroke="rgba(255,255,255,0.075)"/><line x1="128.5" y1="148" x2="128.5" y2="798" stroke="rgba(255,255,255,0.075)"/><line x1="146.5" y1="148" x2="146.5" y2="798" stroke="rgba(255,255,255,0.075)"/><line x1="164.5" y1="148" x2="164.5" y2="798" stroke="rgba(255,255,255,0.14)"/><line x1="182.5" y1="148" x2="182.5" y2="798" stroke="rgba(255,255,255,0.075)"/><line x1="199.5" y1="148" x2="199.5" y2="798" stroke="rgba(255,255,255,0.075)"/><line x1="217.5" y1="148" x2="217.5" y2="798" stroke="rgba(255,255,255,0.075)"/><line x1="235.5" y1="148" x2="235.5" y2="798" stroke="rgba(255,255,255,0.075)"/><line x1="253.5" y1="148" x2="253.5" y2="798" stroke="rgba(255,255,255,0.075)"/><line x1="271.5" y1="148" x2="271.5" y2="798" stroke="rgba(255,255,255,0.075)"/><line x1="289.5" y1="148" x2="289.5" y2="798" stroke="rgba(255,255,255,0.075)"/><line x1="307.5" y1="148" x2="307.5" y2="798" stroke="rgba(255,255,255,0.14)"/><line x1="325.5" y1="148" x2="325.5" y2="798" stroke="rgba(255,255,255,0.075)"/><line x1="343.5" y1="148" x2="343.5" y2="798" stroke="rgba(255,255,255,0.075)"/><line x1="361.5" y1="148" x2="361.5" y2="798" stroke="rgba(255,255,255,0.075)"/><line x1="379.5" y1="148" x2="379.5" y2="798" stroke="rgba(255,255,255,0.075)"/><line x1="397.5" y1="148" x2="397.5" y2="798" stroke="rgba(255,255,255,0.075)"/><line x1="415.5" y1="148" x2="415.5" y2="798" stroke="rgba(255,255,255,0.075)"/><line x1="433.5" y1="148" x2="433.5" y2="798" stroke="rgba(255,255,255,0.075)"/><line x1="451.5" y1="148" x2="451.5" y2="798" stroke="rgba(255,255,255,0.14)"/><line x1="469.5" y1="148" x2="469.5" y2="798" stroke="rgba(255,255,255,0.075)"/><line x1="487.5" y1="148" x2="487.5" y2="798" stroke="rgba(255,255,255,0.075)"/><line x1="505.5" y1="148" x2="505.5" y2="798" stroke="rgba(255,255,255,0.075)"/><line x1="523.5" y1="148" x2="523.5" y2="798" stroke="rgba(255,255,255,0.075)"/><line x1="541.5" y1="148" x2="541.5" y2="798" stroke="rgba(255,255,255,0.075)"/><line x1="559.5" y1="148" x2="559.5" y2="798" stroke="rgba(255,255,255,0.075)"/><line x1="577.5" y1="148" x2="577.5" y2="798" stroke="rgba(255,255,255,0.075)"/><line x1="595.5" y1="148" x2="595.5" y2="798" stroke="rgba(255,255,255,0.14)"/><line x1="612.5" y1="148" x2="612.5" y2="798" stroke="rgba(255,255,255,0.075)"/><line x1="630.5" y1="148" x2="630.5" y2="798" stroke="rgba(255,255,255,0.075)"/><line x1="648.5" y1="148" x2="648.5" y2="798" stroke="rgba(255,255,255,0.075)"/><line x1="666.5" y1="148" x2="666.5" y2="798" stroke="rgba(255,255,255,0.075)"/><line x1="684.5" y1="148" x2="684.5" y2="798" stroke="rgba(255,255,255,0.075)"/><line x1="702.5" y1="148" x2="702.5" y2="798" stroke="rgba(255,255,255,0.075)"/><line x1="720.5" y1="148" x2="720.5" y2="798" stroke="rgba(255,255,255,0.075)"/><line x1="738.5" y1="148" x2="738.5" y2="798" stroke="rgba(255,255,255,0.14)"/><line x1="756.5" y1="148" x2="756.5" y2="798" stroke="rgba(255,255,255,0.075)"/><line x1="774.5" y1="148" x2="774.5" y2="798" stroke="rgba(255,255,255,0.075)"/><line x1="792.5" y1="148" x2="792.5" y2="798" stroke="rgba(255,255,255,0.075)"/><line x1="810.5" y1="148" x2="810.5" y2="798" stroke="rgba(255,255,255,0.075)"/><line x1="828.5" y1="148" x2="828.5" y2="798" stroke="rgba(255,255,255,0.075)"/><line x1="846.5" y1="148" x2="846.5" y2="798" stroke="rgba(255,255,255,0.075)"/><line x1="864.5" y1="148" x2="864.5" y2="798" stroke="rgba(255,255,255,0.075)"/><line x1="882.5" y1="148" x2="882.5" y2="798" stroke="rgba(255,255,255,0.14)"/><line x1="900.5" y1="148" x2="900.5" y2="798" stroke="rgba(255,255,255,0.075)"/><line x1="918.5" y1="148" x2="918.5" y2="798" stroke="rgba(255,255,255,0.075)"/><line x1="936.5" y1="148" x2="936.5" y2="798" stroke="rgba(255,255,255,0.075)"/><line x1="954.5" y1="148" x2="954.5" y2="798" stroke="rgba(255,255,255,0.075)"/><line x1="972.5" y1="148" x2="972.5" y2="798" stroke="rgba(255,255,255,0.075)"/><line x1="990.5" y1="148" x2="990.5" y2="798" stroke="rgba(255,255,255,0.075)"/><line x1="1007.5" y1="148" x2="1007.5" y2="798" stroke="rgba(255,255,255,0.075)"/><line x1="1025.5" y1="148" x2="1025.5" y2="798" stroke="rgba(255,255,255,0.14)"/><line x1="1043.5" y1="148" x2="1043.5" y2="798" stroke="rgba(255,255,255,0.075)"/><line x1="1061.5" y1="148" x2="1061.5" y2="798" stroke="rgba(255,255,255,0.075)"/><line x1="1079.5" y1="148" x2="1079.5" y2="798" stroke="rgba(255,255,255,0.075)"/><line x1="1097.5" y1="148" x2="1097.5" y2="798" stroke="rgba(255,255,255,0.075)"/><line x1="1115.5" y1="148" x2="1115.5" y2="798" stroke="rgba(255,255,255,0.075)"/><line x1="1133.5" y1="148" x2="1133.5" y2="798" stroke="rgba(255,255,255,0.075)"/><line x1="1151.5" y1="148" x2="1151.5" y2="798" stroke="rgba(255,255,255,0.075)"/><line x1="1169.5" y1="148" x2="1169.5" y2="798" stroke="rgba(255,255,255,0.14)"/><line x1="1187.5" y1="148" x2="1187.5" y2="798" stroke="rgba(255,255,255,0.075)"/><line x1="1205.5" y1="148" x2="1205.5" y2="798" stroke="rgba(255,255,255,0.075)"/><line x1="1223.5" y1="148" x2="1223.5" y2="798" stroke="rgba(255,255,255,0.075)"/><line x1="1241.5" y1="148" x2="1241.5" y2="798" stroke="rgba(255,255,255,0.075)"/><line x1="1259.5" y1="148" x2="1259.5" y2="798" stroke="rgba(255,255,255,0.075)"/><line x1="1277.5" y1="148" x2="1277.5" y2="798" stroke="rgba(255,255,255,0.075)"/><line x1="1295.5" y1="148" x2="1295.5" y2="798" stroke="rgba(255,255,255,0.075)"/><line x1="1313.5" y1="148" x2="1313.5" y2="798" stroke="rgba(255,255,255,0.14)"/><line x1="1331.5" y1="148" x2="1331.5" y2="798" stroke="rgba(255,255,255,0.075)"/><line x1="1349.5" y1="148" x2="1349.5" y2="798" stroke="rgba(255,255,255,0.075)"/><line x1="1367.5" y1="148" x2="1367.5" y2="798" stroke="rgba(255,255,255,0.075)"/><line x1="1385.5" y1="148" x2="1385.5" y2="798" stroke="rgba(255,255,255,0.075)"/><line x1="1403.5" y1="148" x2="1403.5" y2="798" stroke="rgba(255,255,255,0.075)"/><line x1="1420.5" y1="148" x2="1420.5" y2="798" stroke="rgba(255,255,255,0.075)"/><line x1="1438.5" y1="148" x2="1438.5" y2="798" stroke="rgba(255,255,255,0.075)"/><line x1="1456.5" y1="148" x2="1456.5" y2="798" stroke="rgba(255,255,255,0.14)"/><line x1="1474.5" y1="148" x2="1474.5" y2="798" stroke="rgba(255,255,255,0.075)"/><line x1="1492.5" y1="148" x2="1492.5" y2="798" stroke="rgba(255,255,255,0.075)"/><line x1="1510.5" y1="148" x2="1510.5" y2="798" stroke="rgba(255,255,255,0.075)"/><line x1="1528.5" y1="148" x2="1528.5" y2="798" stroke="rgba(255,255,255,0.075)"/><line x1="1546.5" y1="148" x2="1546.5" y2="798" stroke="rgba(255,255,255,0.075)"/><line x1="1564.5" y1="148" x2="1564.5" y2="798" stroke="rgba(255,255,255,0.075)"/><line x1="1582.5" y1="148" x2="1582.5" y2="798" stroke="rgba(255,255,255,0.075)"/><line x1="25" y1="151.5" x2="1589" y2="151.5" stroke="rgba(255,255,255,0.075)"/><line x1="25" y1="169.5" x2="1589" y2="169.5" stroke="rgba(255,255,255,0.075)"/><line x1="25" y1="187.5" x2="1589" y2="187.5" stroke="rgba(255,255,255,0.075)"/><line x1="25" y1="205.5" x2="1589" y2="205.5" stroke="rgba(255,255,255,0.075)"/><line x1="25" y1="223.5" x2="1589" y2="223.5" stroke="rgba(255,255,255,0.14)"/><line x1="25" y1="241.5" x2="1589" y2="241.5" stroke="rgba(255,255,255,0.075)"/><line x1="25" y1="259.5" x2="1589" y2="259.5" stroke="rgba(255,255,255,0.075)"/><line x1="25" y1="277.5" x2="1589" y2="277.5" stroke="rgba(255,255,255,0.075)"/><line x1="25" y1="295.5" x2="1589" y2="295.5" stroke="rgba(255,255,255,0.075)"/><line x1="25" y1="313.5" x2="1589" y2="313.5" stroke="rgba(255,255,255,0.075)"/><line x1="25" y1="330.5" x2="1589" y2="330.5" stroke="rgba(255,255,255,0.075)"/><line x1="25" y1="348.5" x2="1589" y2="348.5" stroke="rgba(255,255,255,0.075)"/><line x1="25" y1="366.5" x2="1589" y2="366.5" stroke="rgba(255,255,255,0.14)"/><line x1="25" y1="384.5" x2="1589" y2="384.5" stroke="rgba(255,255,255,0.075)"/><line x1="25" y1="402.5" x2="1589" y2="402.5" stroke="rgba(255,255,255,0.075)"/><line x1="25" y1="420.5" x2="1589" y2="420.5" stroke="rgba(255,255,255,0.075)"/><line x1="25" y1="438.5" x2="1589" y2="438.5" stroke="rgba(255,255,255,0.075)"/><line x1="25" y1="456.5" x2="1589" y2="456.5" stroke="rgba(255,255,255,0.075)"/><line x1="25" y1="474.5" x2="1589" y2="474.5" stroke="rgba(255,255,255,0.075)"/><line x1="25" y1="492.5" x2="1589" y2="492.5" stroke="rgba(255,255,255,0.075)"/><line x1="25" y1="510.5" x2="1589" y2="510.5" stroke="rgba(255,255,255,0.14)"/><line x1="25" y1="528.5" x2="1589" y2="528.5" stroke="rgba(255,255,255,0.075)"/><line x1="25" y1="546.5" x2="1589" y2="546.5" stroke="rgba(255,255,255,0.075)"/><line x1="25" y1="564.5" x2="1589" y2="564.5" stroke="rgba(255,255,255,0.075)"/><line x1="25" y1="582.5" x2="1589" y2="582.5" stroke="rgba(255,255,255,0.075)"/><line x1="25" y1="600.5" x2="1589" y2="600.5" stroke="rgba(255,255,255,0.075)"/><line x1="25" y1="618.5" x2="1589" y2="618.5" stroke="rgba(255,255,255,0.075)"/><line x1="25" y1="636.5" x2="1589" y2="636.5" stroke="rgba(255,255,255,0.075)"/><line x1="25" y1="654.5" x2="1589" y2="654.5" stroke="rgba(255,255,255,0.14)"/><line x1="25" y1="672.5" x2="1589" y2="672.5" stroke="rgba(255,255,255,0.075)"/><line x1="25" y1="690.5" x2="1589" y2="690.5" stroke="rgba(255,255,255,0.075)"/><line x1="25" y1="708.5" x2="1589" y2="708.5" stroke="rgba(255,255,255,0.075)"/><line x1="25" y1="726.5" x2="1589" y2="726.5" stroke="rgba(255,255,255,0.075)"/><line x1="25" y1="743.5" x2="1589" y2="743.5" stroke="rgba(255,255,255,0.075)"/><line x1="25" y1="761.5" x2="1589" y2="761.5" stroke="rgba(255,255,255,0.075)"/><line x1="25" y1="779.5" x2="1589" y2="779.5" stroke="rgba(255,255,255,0.075)"/><line x1="25" y1="797.5" x2="1589" y2="797.5" stroke="rgba(255,255,255,0.14)"/></g><g shape-rendering="crispEdges"><line x1="25" y1="509.5" x2="595" y2="509.5" stroke="#d23a4e"/><line x1="595" y1="509.5" x2="1589" y2="509.5" stroke="#b858b4"/><line x1="595.5" y1="148" x2="595.5" y2="509" stroke="#80c81c"/><line x1="595.5" y1="510" x2="595.5" y2="798" stroke="#7ba878"/></g><line x1="474.8" y1="148" x2="465.6" y2="800" stroke="#ee8c58" stroke-width="3"/><circle cx="463.9" cy="518.9" r="5" fill="#111"/><circle cx="463.9" cy="518.9" r="4.2" fill="#fff"/><circle cx="463.9" cy="518.9" r="3.4" fill="#ff8585"/><g><circle cx="595.5" cy="509.5" r="3.9" fill="#151515"/><circle cx="595.5" cy="509.5" r="3.0" fill="#d0d0d0"/><rect x="587" y="507.5" width="5" height="4" fill="#111"/><rect x="588" y="508.5" width="3" height="2" fill="#e8e8e8"/><rect x="599" y="507.5" width="5" height="4" fill="#111"/><rect x="600" y="508.5" width="3" height="2" fill="#e8e8e8"/><rect x="593.5" y="502" width="4" height="5" fill="#111"/><rect x="594.5" y="503" width="2" height="3" fill="#e8e8e8"/><rect x="593.5" y="513" width="4" height="5" fill="#111"/><rect x="594.5" y="514" width="2" height="3" fill="#e8e8e8"/></g><line x1="972" y1="509.5" x2="1117" y2="509.5" stroke="#b858b4" shape-rendering="crispEdges"/><g shape-rendering="crispEdges"><rect x="1042.5" y="520" width="2" height="13" fill="#ff6060"/><rect x="1036.5" y="526" width="14" height="2" fill="#ff6060"/><rect x="1044.5" y="527.5" width="14" height="14" fill="#2a5070"/><rect x="1045.5" y="528.5" width="12" height="12" fill="#dcdcdc"/><rect x="1052.5" y="529.5" width="5" height="5" fill="#2a5070"/><rect x="1053.5" y="530.5" width="3" height="3" fill="#6bcdf7"/><rect x="1045.5" y="529.5" width="5" height="5" fill="#2a5070"/><rect x="1046.5" y="530.5" width="3" height="3" fill="#6bcdf7"/><rect x="1056.5" y="537.5" width="5" height="5" fill="#2a5070"/><rect x="1057.5" y="538.5" width="3" height="3" fill="#ffffff"/></g><rect x="28" y="792" width="1550" height="6" rx="3" fill="rgba(255,255,255,0.05)"/><rect x="395" y="792" width="462" height="6" rx="3" fill="rgba(255,255,255,0.3)"/><rect x="1581" y="150" width="6" height="640" rx="3" fill="rgba(255,255,255,0.05)"/><rect x="1581" y="333" width="6" height="165" rx="3" fill="rgba(255,255,255,0.38)"/><g shape-rendering="crispEdges"><rect x="10" y="133" width="1580" height="15" fill="#0f1013"/><rect x="10" y="133" width="15" height="667" fill="#0f1013"/><rect x="11" y="134" width="14" height="14" fill="#777"/><line x1="27.5" y1="144" x2="27.5" y2="148" stroke="#8c8c8c"/><line x1="34.5" y1="144" x2="34.5" y2="148" stroke="#8c8c8c"/><line x1="41.5" y1="144" x2="41.5" y2="148" stroke="#8c8c8c"/><line x1="49.5" y1="144" x2="49.5" y2="148" stroke="#8c8c8c"/><line x1="56.5" y1="138" x2="56.5" y2="148" stroke="#8c8c8c"/><line x1="63.5" y1="144" x2="63.5" y2="148" stroke="#8c8c8c"/><line x1="70.5" y1="144" x2="70.5" y2="148" stroke="#8c8c8c"/><line x1="77.5" y1="144" x2="77.5" y2="148" stroke="#8c8c8c"/><line x1="85.5" y1="144" x2="85.5" y2="148" stroke="#8c8c8c"/><line x1="92.5" y1="134" x2="92.5" y2="148" stroke="#8c8c8c"/><text x="94.0" y="143" class="rl">-224</text><line x1="99.5" y1="144" x2="99.5" y2="148" stroke="#8c8c8c"/><line x1="106.5" y1="144" x2="106.5" y2="148" stroke="#8c8c8c"/><line x1="113.5" y1="144" x2="113.5" y2="148" stroke="#8c8c8c"/><line x1="120.5" y1="144" x2="120.5" y2="148" stroke="#8c8c8c"/><line x1="128.5" y1="138" x2="128.5" y2="148" stroke="#8c8c8c"/><line x1="135.5" y1="144" x2="135.5" y2="148" stroke="#8c8c8c"/><line x1="142.5" y1="144" x2="142.5" y2="148" stroke="#8c8c8c"/><line x1="149.5" y1="144" x2="149.5" y2="148" stroke="#8c8c8c"/><line x1="156.5" y1="144" x2="156.5" y2="148" stroke="#8c8c8c"/><line x1="164.5" y1="134" x2="164.5" y2="148" stroke="#8c8c8c"/><text x="166.0" y="143" class="rl">-192</text><line x1="171.5" y1="144" x2="171.5" y2="148" stroke="#8c8c8c"/><line x1="178.5" y1="144" x2="178.5" y2="148" stroke="#8c8c8c"/><line x1="185.5" y1="144" x2="185.5" y2="148" stroke="#8c8c8c"/><line x1="192.5" y1="144" x2="192.5" y2="148" stroke="#8c8c8c"/><line x1="199.5" y1="138" x2="199.5" y2="148" stroke="#8c8c8c"/><line x1="207.5" y1="144" x2="207.5" y2="148" stroke="#8c8c8c"/><line x1="214.5" y1="144" x2="214.5" y2="148" stroke="#8c8c8c"/><line x1="221.5" y1="144" x2="221.5" y2="148" stroke="#8c8c8c"/><line x1="228.5" y1="144" x2="228.5" y2="148" stroke="#8c8c8c"/><line x1="235.5" y1="134" x2="235.5" y2="148" stroke="#8c8c8c"/><text x="237.0" y="143" class="rl">-160</text><line x1="243.5" y1="144" x2="243.5" y2="148" stroke="#8c8c8c"/><line x1="250.5" y1="144" x2="250.5" y2="148" stroke="#8c8c8c"/><line x1="257.5" y1="144" x2="257.5" y2="148" stroke="#8c8c8c"/><line x1="264.5" y1="144" x2="264.5" y2="148" stroke="#8c8c8c"/><line x1="271.5" y1="138" x2="271.5" y2="148" stroke="#8c8c8c"/><line x1="278.5" y1="144" x2="278.5" y2="148" stroke="#8c8c8c"/><line x1="286.5" y1="144" x2="286.5" y2="148" stroke="#8c8c8c"/><line x1="293.5" y1="144" x2="293.5" y2="148" stroke="#8c8c8c"/><line x1="300.5" y1="144" x2="300.5" y2="148" stroke="#8c8c8c"/><line x1="307.5" y1="134" x2="307.5" y2="148" stroke="#8c8c8c"/><text x="309.0" y="143" class="rl">-128</text><line x1="314.5" y1="144" x2="314.5" y2="148" stroke="#8c8c8c"/><line x1="322.5" y1="144" x2="322.5" y2="148" stroke="#8c8c8c"/><line x1="329.5" y1="144" x2="329.5" y2="148" stroke="#8c8c8c"/><line x1="336.5" y1="144" x2="336.5" y2="148" stroke="#8c8c8c"/><line x1="343.5" y1="138" x2="343.5" y2="148" stroke="#8c8c8c"/><line x1="350.5" y1="144" x2="350.5" y2="148" stroke="#8c8c8c"/><line x1="357.5" y1="144" x2="357.5" y2="148" stroke="#8c8c8c"/><line x1="365.5" y1="144" x2="365.5" y2="148" stroke="#8c8c8c"/><line x1="372.5" y1="144" x2="372.5" y2="148" stroke="#8c8c8c"/><line x1="379.5" y1="134" x2="379.5" y2="148" stroke="#8c8c8c"/><text x="381.0" y="143" class="rl">-96</text><line x1="386.5" y1="144" x2="386.5" y2="148" stroke="#8c8c8c"/><line x1="393.5" y1="144" x2="393.5" y2="148" stroke="#8c8c8c"/><line x1="401.5" y1="144" x2="401.5" y2="148" stroke="#8c8c8c"/><line x1="408.5" y1="144" x2="408.5" y2="148" stroke="#8c8c8c"/><line x1="415.5" y1="138" x2="415.5" y2="148" stroke="#8c8c8c"/><line x1="422.5" y1="144" x2="422.5" y2="148" stroke="#8c8c8c"/><line x1="429.5" y1="144" x2="429.5" y2="148" stroke="#8c8c8c"/><line x1="436.5" y1="144" x2="436.5" y2="148" stroke="#8c8c8c"/><line x1="444.5" y1="144" x2="444.5" y2="148" stroke="#8c8c8c"/><line x1="451.5" y1="134" x2="451.5" y2="148" stroke="#8c8c8c"/><text x="453.0" y="143" class="rl">-64</text><line x1="458.5" y1="144" x2="458.5" y2="148" stroke="#8c8c8c"/><line x1="465.5" y1="144" x2="465.5" y2="148" stroke="#8c8c8c"/><line x1="472.5" y1="144" x2="472.5" y2="148" stroke="#8c8c8c"/><line x1="480.5" y1="144" x2="480.5" y2="148" stroke="#8c8c8c"/><line x1="487.5" y1="138" x2="487.5" y2="148" stroke="#8c8c8c"/><line x1="494.5" y1="144" x2="494.5" y2="148" stroke="#8c8c8c"/><line x1="501.5" y1="144" x2="501.5" y2="148" stroke="#8c8c8c"/><line x1="508.5" y1="144" x2="508.5" y2="148" stroke="#8c8c8c"/><line x1="515.5" y1="144" x2="515.5" y2="148" stroke="#8c8c8c"/><line x1="523.5" y1="134" x2="523.5" y2="148" stroke="#8c8c8c"/><text x="525.0" y="143" class="rl">-32</text><line x1="530.5" y1="144" x2="530.5" y2="148" stroke="#8c8c8c"/><line x1="537.5" y1="144" x2="537.5" y2="148" stroke="#8c8c8c"/><line x1="544.5" y1="144" x2="544.5" y2="148" stroke="#8c8c8c"/><line x1="551.5" y1="144" x2="551.5" y2="148" stroke="#8c8c8c"/><line x1="559.5" y1="138" x2="559.5" y2="148" stroke="#8c8c8c"/><line x1="566.5" y1="144" x2="566.5" y2="148" stroke="#8c8c8c"/><line x1="573.5" y1="144" x2="573.5" y2="148" stroke="#8c8c8c"/><line x1="580.5" y1="144" x2="580.5" y2="148" stroke="#8c8c8c"/><line x1="587.5" y1="144" x2="587.5" y2="148" stroke="#8c8c8c"/><line x1="595.5" y1="134" x2="595.5" y2="148" stroke="#8c8c8c"/><text x="597.0" y="143" class="rl">0</text><line x1="602.5" y1="144" x2="602.5" y2="148" stroke="#8c8c8c"/><line x1="609.5" y1="144" x2="609.5" y2="148" stroke="#8c8c8c"/><line x1="616.5" y1="144" x2="616.5" y2="148" stroke="#8c8c8c"/><line x1="623.5" y1="144" x2="623.5" y2="148" stroke="#8c8c8c"/><line x1="630.5" y1="138" x2="630.5" y2="148" stroke="#8c8c8c"/><line x1="638.5" y1="144" x2="638.5" y2="148" stroke="#8c8c8c"/><line x1="645.5" y1="144" x2="645.5" y2="148" stroke="#8c8c8c"/><line x1="652.5" y1="144" x2="652.5" y2="148" stroke="#8c8c8c"/><line x1="659.5" y1="144" x2="659.5" y2="148" stroke="#8c8c8c"/><line x1="666.5" y1="134" x2="666.5" y2="148" stroke="#8c8c8c"/><text x="668.0" y="143" class="rl">32</text><line x1="674.5" y1="144" x2="674.5" y2="148" stroke="#8c8c8c"/><line x1="681.5" y1="144" x2="681.5" y2="148" stroke="#8c8c8c"/><line x1="688.5" y1="144" x2="688.5" y2="148" stroke="#8c8c8c"/><line x1="695.5" y1="144" x2="695.5" y2="148" stroke="#8c8c8c"/><line x1="702.5" y1="138" x2="702.5" y2="148" stroke="#8c8c8c"/><line x1="709.5" y1="144" x2="709.5" y2="148" stroke="#8c8c8c"/><line x1="717.5" y1="144" x2="717.5" y2="148" stroke="#8c8c8c"/><line x1="724.5" y1="144" x2="724.5" y2="148" stroke="#8c8c8c"/><line x1="731.5" y1="144" x2="731.5" y2="148" stroke="#8c8c8c"/><line x1="738.5" y1="134" x2="738.5" y2="148" stroke="#8c8c8c"/><text x="740.0" y="143" class="rl">64</text><line x1="745.5" y1="144" x2="745.5" y2="148" stroke="#8c8c8c"/><line x1="753.5" y1="144" x2="753.5" y2="148" stroke="#8c8c8c"/><line x1="760.5" y1="144" x2="760.5" y2="148" stroke="#8c8c8c"/><line x1="767.5" y1="144" x2="767.5" y2="148" stroke="#8c8c8c"/><line x1="774.5" y1="138" x2="774.5" y2="148" stroke="#8c8c8c"/><line x1="781.5" y1="144" x2="781.5" y2="148" stroke="#8c8c8c"/><line x1="788.5" y1="144" x2="788.5" y2="148" stroke="#8c8c8c"/><line x1="796.5" y1="144" x2="796.5" y2="148" stroke="#8c8c8c"/><line x1="803.5" y1="144" x2="803.5" y2="148" stroke="#8c8c8c"/><line x1="810.5" y1="134" x2="810.5" y2="148" stroke="#8c8c8c"/><text x="812.0" y="143" class="rl">96</text><line x1="817.5" y1="144" x2="817.5" y2="148" stroke="#8c8c8c"/><line x1="824.5" y1="144" x2="824.5" y2="148" stroke="#8c8c8c"/><line x1="832.5" y1="144" x2="832.5" y2="148" stroke="#8c8c8c"/><line x1="839.5" y1="144" x2="839.5" y2="148" stroke="#8c8c8c"/><line x1="846.5" y1="138" x2="846.5" y2="148" stroke="#8c8c8c"/><line x1="853.5" y1="144" x2="853.5" y2="148" stroke="#8c8c8c"/><line x1="860.5" y1="144" x2="860.5" y2="148" stroke="#8c8c8c"/><line x1="867.5" y1="144" x2="867.5" y2="148" stroke="#8c8c8c"/><line x1="875.5" y1="144" x2="875.5" y2="148" stroke="#8c8c8c"/><line x1="882.5" y1="134" x2="882.5" y2="148" stroke="#8c8c8c"/><text x="884.0" y="143" class="rl">128</text><line x1="889.5" y1="144" x2="889.5" y2="148" stroke="#8c8c8c"/><line x1="896.5" y1="144" x2="896.5" y2="148" stroke="#8c8c8c"/><line x1="903.5" y1="144" x2="903.5" y2="148" stroke="#8c8c8c"/><line x1="911.5" y1="144" x2="911.5" y2="148" stroke="#8c8c8c"/><line x1="918.5" y1="138" x2="918.5" y2="148" stroke="#8c8c8c"/><line x1="925.5" y1="144" x2="925.5" y2="148" stroke="#8c8c8c"/><line x1="932.5" y1="144" x2="932.5" y2="148" stroke="#8c8c8c"/><line x1="939.5" y1="144" x2="939.5" y2="148" stroke="#8c8c8c"/><line x1="946.5" y1="144" x2="946.5" y2="148" stroke="#8c8c8c"/><line x1="954.5" y1="134" x2="954.5" y2="148" stroke="#8c8c8c"/><text x="956.0" y="143" class="rl">160</text><line x1="961.5" y1="144" x2="961.5" y2="148" stroke="#8c8c8c"/><line x1="968.5" y1="144" x2="968.5" y2="148" stroke="#8c8c8c"/><line x1="975.5" y1="144" x2="975.5" y2="148" stroke="#8c8c8c"/><line x1="982.5" y1="144" x2="982.5" y2="148" stroke="#8c8c8c"/><line x1="990.5" y1="138" x2="990.5" y2="148" stroke="#8c8c8c"/><line x1="997.5" y1="144" x2="997.5" y2="148" stroke="#8c8c8c"/><line x1="1004.5" y1="144" x2="1004.5" y2="148" stroke="#8c8c8c"/><line x1="1011.5" y1="144" x2="1011.5" y2="148" stroke="#8c8c8c"/><line x1="1018.5" y1="144" x2="1018.5" y2="148" stroke="#8c8c8c"/><line x1="1025.5" y1="134" x2="1025.5" y2="148" stroke="#8c8c8c"/><text x="1027.0" y="143" class="rl">192</text><line x1="1033.5" y1="144" x2="1033.5" y2="148" stroke="#8c8c8c"/><line x1="1040.5" y1="144" x2="1040.5" y2="148" stroke="#8c8c8c"/><line x1="1047.5" y1="144" x2="1047.5" y2="148" stroke="#8c8c8c"/><line x1="1054.5" y1="144" x2="1054.5" y2="148" stroke="#8c8c8c"/><line x1="1061.5" y1="138" x2="1061.5" y2="148" stroke="#8c8c8c"/><line x1="1069.5" y1="144" x2="1069.5" y2="148" stroke="#8c8c8c"/><line x1="1076.5" y1="144" x2="1076.5" y2="148" stroke="#8c8c8c"/><line x1="1083.5" y1="144" x2="1083.5" y2="148" stroke="#8c8c8c"/><line x1="1090.5" y1="144" x2="1090.5" y2="148" stroke="#8c8c8c"/><line x1="1097.5" y1="134" x2="1097.5" y2="148" stroke="#8c8c8c"/><text x="1099.0" y="143" class="rl">224</text><line x1="1104.5" y1="144" x2="1104.5" y2="148" stroke="#8c8c8c"/><line x1="1112.5" y1="144" x2="1112.5" y2="148" stroke="#8c8c8c"/><line x1="1119.5" y1="144" x2="1119.5" y2="148" stroke="#8c8c8c"/><line x1="1126.5" y1="144" x2="1126.5" y2="148" stroke="#8c8c8c"/><line x1="1133.5" y1="138" x2="1133.5" y2="148" stroke="#8c8c8c"/><line x1="1140.5" y1="144" x2="1140.5" y2="148" stroke="#8c8c8c"/><line x1="1148.5" y1="144" x2="1148.5" y2="148" stroke="#8c8c8c"/><line x1="1155.5" y1="144" x2="1155.5" y2="148" stroke="#8c8c8c"/><line x1="1162.5" y1="144" x2="1162.5" y2="148" stroke="#8c8c8c"/><line x1="1169.5" y1="134" x2="1169.5" y2="148" stroke="#8c8c8c"/><text x="1171.0" y="143" class="rl">256</text><line x1="1176.5" y1="144" x2="1176.5" y2="148" stroke="#8c8c8c"/><line x1="1183.5" y1="144" x2="1183.5" y2="148" stroke="#8c8c8c"/><line x1="1191.5" y1="144" x2="1191.5" y2="148" stroke="#8c8c8c"/><line x1="1198.5" y1="144" x2="1198.5" y2="148" stroke="#8c8c8c"/><line x1="1205.5" y1="138" x2="1205.5" y2="148" stroke="#8c8c8c"/><line x1="1212.5" y1="144" x2="1212.5" y2="148" stroke="#8c8c8c"/><line x1="1219.5" y1="144" x2="1219.5" y2="148" stroke="#8c8c8c"/><line x1="1227.5" y1="144" x2="1227.5" y2="148" stroke="#8c8c8c"/><line x1="1234.5" y1="144" x2="1234.5" y2="148" stroke="#8c8c8c"/><line x1="1241.5" y1="134" x2="1241.5" y2="148" stroke="#8c8c8c"/><text x="1243.0" y="143" class="rl">288</text><line x1="1248.5" y1="144" x2="1248.5" y2="148" stroke="#8c8c8c"/><line x1="1255.5" y1="144" x2="1255.5" y2="148" stroke="#8c8c8c"/><line x1="1262.5" y1="144" x2="1262.5" y2="148" stroke="#8c8c8c"/><line x1="1270.5" y1="144" x2="1270.5" y2="148" stroke="#8c8c8c"/><line x1="1277.5" y1="138" x2="1277.5" y2="148" stroke="#8c8c8c"/><line x1="1284.5" y1="144" x2="1284.5" y2="148" stroke="#8c8c8c"/><line x1="1291.5" y1="144" x2="1291.5" y2="148" stroke="#8c8c8c"/><line x1="1298.5" y1="144" x2="1298.5" y2="148" stroke="#8c8c8c"/><line x1="1306.5" y1="144" x2="1306.5" y2="148" stroke="#8c8c8c"/><line x1="1313.5" y1="134" x2="1313.5" y2="148" stroke="#8c8c8c"/><text x="1315.0" y="143" class="rl">320</text><line x1="1320.5" y1="144" x2="1320.5" y2="148" stroke="#8c8c8c"/><line x1="1327.5" y1="144" x2="1327.5" y2="148" stroke="#8c8c8c"/><line x1="1334.5" y1="144" x2="1334.5" y2="148" stroke="#8c8c8c"/><line x1="1341.5" y1="144" x2="1341.5" y2="148" stroke="#8c8c8c"/><line x1="1349.5" y1="138" x2="1349.5" y2="148" stroke="#8c8c8c"/><line x1="1356.5" y1="144" x2="1356.5" y2="148" stroke="#8c8c8c"/><line x1="1363.5" y1="144" x2="1363.5" y2="148" stroke="#8c8c8c"/><line x1="1370.5" y1="144" x2="1370.5" y2="148" stroke="#8c8c8c"/><line x1="1377.5" y1="144" x2="1377.5" y2="148" stroke="#8c8c8c"/><line x1="1385.5" y1="134" x2="1385.5" y2="148" stroke="#8c8c8c"/><text x="1387.0" y="143" class="rl">352</text><line x1="1392.5" y1="144" x2="1392.5" y2="148" stroke="#8c8c8c"/><line x1="1399.5" y1="144" x2="1399.5" y2="148" stroke="#8c8c8c"/><line x1="1406.5" y1="144" x2="1406.5" y2="148" stroke="#8c8c8c"/><line x1="1413.5" y1="144" x2="1413.5" y2="148" stroke="#8c8c8c"/><line x1="1420.5" y1="138" x2="1420.5" y2="148" stroke="#8c8c8c"/><line x1="1428.5" y1="144" x2="1428.5" y2="148" stroke="#8c8c8c"/><line x1="1435.5" y1="144" x2="1435.5" y2="148" stroke="#8c8c8c"/><line x1="1442.5" y1="144" x2="1442.5" y2="148" stroke="#8c8c8c"/><line x1="1449.5" y1="144" x2="1449.5" y2="148" stroke="#8c8c8c"/><line x1="1456.5" y1="134" x2="1456.5" y2="148" stroke="#8c8c8c"/><text x="1458.0" y="143" class="rl">384</text><line x1="1464.5" y1="144" x2="1464.5" y2="148" stroke="#8c8c8c"/><line x1="1471.5" y1="144" x2="1471.5" y2="148" stroke="#8c8c8c"/><line x1="1478.5" y1="144" x2="1478.5" y2="148" stroke="#8c8c8c"/><line x1="1485.5" y1="144" x2="1485.5" y2="148" stroke="#8c8c8c"/><line x1="1492.5" y1="138" x2="1492.5" y2="148" stroke="#8c8c8c"/><line x1="1499.5" y1="144" x2="1499.5" y2="148" stroke="#8c8c8c"/><line x1="1507.5" y1="144" x2="1507.5" y2="148" stroke="#8c8c8c"/><line x1="1514.5" y1="144" x2="1514.5" y2="148" stroke="#8c8c8c"/><line x1="1521.5" y1="144" x2="1521.5" y2="148" stroke="#8c8c8c"/><line x1="1528.5" y1="134" x2="1528.5" y2="148" stroke="#8c8c8c"/><text x="1530.0" y="143" class="rl">416</text><line x1="1535.5" y1="144" x2="1535.5" y2="148" stroke="#8c8c8c"/><line x1="1543.5" y1="144" x2="1543.5" y2="148" stroke="#8c8c8c"/><line x1="1550.5" y1="144" x2="1550.5" y2="148" stroke="#8c8c8c"/><line x1="1557.5" y1="144" x2="1557.5" y2="148" stroke="#8c8c8c"/><line x1="1564.5" y1="138" x2="1564.5" y2="148" stroke="#8c8c8c"/><line x1="1571.5" y1="144" x2="1571.5" y2="148" stroke="#8c8c8c"/><line x1="1578.5" y1="144" x2="1578.5" y2="148" stroke="#8c8c8c"/><line x1="1586.5" y1="144" x2="1586.5" y2="148" stroke="#8c8c8c"/><line x1="11" y1="150.5" x2="25" y2="150.5" stroke="#8c8c8c"/><line x1="21" y1="157.5" x2="25" y2="157.5" stroke="#8c8c8c"/><line x1="21" y1="164.5" x2="25" y2="164.5" stroke="#8c8c8c"/><line x1="21" y1="171.5" x2="25" y2="171.5" stroke="#8c8c8c"/><line x1="21" y1="179.5" x2="25" y2="179.5" stroke="#8c8c8c"/><line x1="15" y1="186.5" x2="25" y2="186.5" stroke="#8c8c8c"/><line x1="21" y1="193.5" x2="25" y2="193.5" stroke="#8c8c8c"/><line x1="21" y1="200.5" x2="25" y2="200.5" stroke="#8c8c8c"/><line x1="21" y1="207.5" x2="25" y2="207.5" stroke="#8c8c8c"/><line x1="21" y1="215.5" x2="25" y2="215.5" stroke="#8c8c8c"/><line x1="11" y1="222.5" x2="25" y2="222.5" stroke="#8c8c8c"/><text transform="translate(20,221.0) rotate(-90)" class="rl">-128</text><line x1="21" y1="229.5" x2="25" y2="229.5" stroke="#8c8c8c"/><line x1="21" y1="236.5" x2="25" y2="236.5" stroke="#8c8c8c"/><line x1="21" y1="243.5" x2="25" y2="243.5" stroke="#8c8c8c"/><line x1="21" y1="250.5" x2="25" y2="250.5" stroke="#8c8c8c"/><line x1="15" y1="258.5" x2="25" y2="258.5" stroke="#8c8c8c"/><line x1="21" y1="265.5" x2="25" y2="265.5" stroke="#8c8c8c"/><line x1="21" y1="272.5" x2="25" y2="272.5" stroke="#8c8c8c"/><line x1="21" y1="279.5" x2="25" y2="279.5" stroke="#8c8c8c"/><line x1="21" y1="286.5" x2="25" y2="286.5" stroke="#8c8c8c"/><line x1="11" y1="294.5" x2="25" y2="294.5" stroke="#8c8c8c"/><text transform="translate(20,293.0) rotate(-90)" class="rl">-96</text><line x1="21" y1="301.5" x2="25" y2="301.5" stroke="#8c8c8c"/><line x1="21" y1="308.5" x2="25" y2="308.5" stroke="#8c8c8c"/><line x1="21" y1="315.5" x2="25" y2="315.5" stroke="#8c8c8c"/><line x1="21" y1="322.5" x2="25" y2="322.5" stroke="#8c8c8c"/><line x1="15" y1="329.5" x2="25" y2="329.5" stroke="#8c8c8c"/><line x1="21" y1="337.5" x2="25" y2="337.5" stroke="#8c8c8c"/><line x1="21" y1="344.5" x2="25" y2="344.5" stroke="#8c8c8c"/><line x1="21" y1="351.5" x2="25" y2="351.5" stroke="#8c8c8c"/><line x1="21" y1="358.5" x2="25" y2="358.5" stroke="#8c8c8c"/><line x1="11" y1="365.5" x2="25" y2="365.5" stroke="#8c8c8c"/><text transform="translate(20,364.0) rotate(-90)" class="rl">-64</text><line x1="21" y1="373.5" x2="25" y2="373.5" stroke="#8c8c8c"/><line x1="21" y1="380.5" x2="25" y2="380.5" stroke="#8c8c8c"/><line x1="21" y1="387.5" x2="25" y2="387.5" stroke="#8c8c8c"/><line x1="21" y1="394.5" x2="25" y2="394.5" stroke="#8c8c8c"/><line x1="15" y1="401.5" x2="25" y2="401.5" stroke="#8c8c8c"/><line x1="21" y1="408.5" x2="25" y2="408.5" stroke="#8c8c8c"/><line x1="21" y1="416.5" x2="25" y2="416.5" stroke="#8c8c8c"/><line x1="21" y1="423.5" x2="25" y2="423.5" stroke="#8c8c8c"/><line x1="21" y1="430.5" x2="25" y2="430.5" stroke="#8c8c8c"/><line x1="11" y1="437.5" x2="25" y2="437.5" stroke="#8c8c8c"/><text transform="translate(20,436.0) rotate(-90)" class="rl">-32</text><line x1="21" y1="444.5" x2="25" y2="444.5" stroke="#8c8c8c"/><line x1="21" y1="452.5" x2="25" y2="452.5" stroke="#8c8c8c"/><line x1="21" y1="459.5" x2="25" y2="459.5" stroke="#8c8c8c"/><line x1="21" y1="466.5" x2="25" y2="466.5" stroke="#8c8c8c"/><line x1="15" y1="473.5" x2="25" y2="473.5" stroke="#8c8c8c"/><line x1="21" y1="480.5" x2="25" y2="480.5" stroke="#8c8c8c"/><line x1="21" y1="488.5" x2="25" y2="488.5" stroke="#8c8c8c"/><line x1="21" y1="495.5" x2="25" y2="495.5" stroke="#8c8c8c"/><line x1="21" y1="502.5" x2="25" y2="502.5" stroke="#8c8c8c"/><line x1="11" y1="509.5" x2="25" y2="509.5" stroke="#8c8c8c"/><text transform="translate(20,508.0) rotate(-90)" class="rl">0</text><line x1="21" y1="516.5" x2="25" y2="516.5" stroke="#8c8c8c"/><line x1="21" y1="523.5" x2="25" y2="523.5" stroke="#8c8c8c"/><line x1="21" y1="531.5" x2="25" y2="531.5" stroke="#8c8c8c"/><line x1="21" y1="538.5" x2="25" y2="538.5" stroke="#8c8c8c"/><line x1="15" y1="545.5" x2="25" y2="545.5" stroke="#8c8c8c"/><line x1="21" y1="552.5" x2="25" y2="552.5" stroke="#8c8c8c"/><line x1="21" y1="559.5" x2="25" y2="559.5" stroke="#8c8c8c"/><line x1="21" y1="567.5" x2="25" y2="567.5" stroke="#8c8c8c"/><line x1="21" y1="574.5" x2="25" y2="574.5" stroke="#8c8c8c"/><line x1="11" y1="581.5" x2="25" y2="581.5" stroke="#8c8c8c"/><text transform="translate(20,580.0) rotate(-90)" class="rl">32</text><line x1="21" y1="588.5" x2="25" y2="588.5" stroke="#8c8c8c"/><line x1="21" y1="595.5" x2="25" y2="595.5" stroke="#8c8c8c"/><line x1="21" y1="602.5" x2="25" y2="602.5" stroke="#8c8c8c"/><line x1="21" y1="610.5" x2="25" y2="610.5" stroke="#8c8c8c"/><line x1="15" y1="617.5" x2="25" y2="617.5" stroke="#8c8c8c"/><line x1="21" y1="624.5" x2="25" y2="624.5" stroke="#8c8c8c"/><line x1="21" y1="631.5" x2="25" y2="631.5" stroke="#8c8c8c"/><line x1="21" y1="638.5" x2="25" y2="638.5" stroke="#8c8c8c"/><line x1="21" y1="646.5" x2="25" y2="646.5" stroke="#8c8c8c"/><line x1="11" y1="653.5" x2="25" y2="653.5" stroke="#8c8c8c"/><text transform="translate(20,652.0) rotate(-90)" class="rl">64</text><line x1="21" y1="660.5" x2="25" y2="660.5" stroke="#8c8c8c"/><line x1="21" y1="667.5" x2="25" y2="667.5" stroke="#8c8c8c"/><line x1="21" y1="674.5" x2="25" y2="674.5" stroke="#8c8c8c"/><line x1="21" y1="681.5" x2="25" y2="681.5" stroke="#8c8c8c"/><line x1="15" y1="689.5" x2="25" y2="689.5" stroke="#8c8c8c"/><line x1="21" y1="696.5" x2="25" y2="696.5" stroke="#8c8c8c"/><line x1="21" y1="703.5" x2="25" y2="703.5" stroke="#8c8c8c"/><line x1="21" y1="710.5" x2="25" y2="710.5" stroke="#8c8c8c"/><line x1="21" y1="717.5" x2="25" y2="717.5" stroke="#8c8c8c"/><line x1="11" y1="725.5" x2="25" y2="725.5" stroke="#8c8c8c"/><text transform="translate(20,724.0) rotate(-90)" class="rl">96</text><line x1="21" y1="732.5" x2="25" y2="732.5" stroke="#8c8c8c"/><line x1="21" y1="739.5" x2="25" y2="739.5" stroke="#8c8c8c"/><line x1="21" y1="746.5" x2="25" y2="746.5" stroke="#8c8c8c"/><line x1="21" y1="753.5" x2="25" y2="753.5" stroke="#8c8c8c"/><line x1="15" y1="760.5" x2="25" y2="760.5" stroke="#8c8c8c"/><line x1="21" y1="768.5" x2="25" y2="768.5" stroke="#8c8c8c"/><line x1="21" y1="775.5" x2="25" y2="775.5" stroke="#8c8c8c"/><line x1="21" y1="782.5" x2="25" y2="782.5" stroke="#8c8c8c"/><line x1="21" y1="789.5" x2="25" y2="789.5" stroke="#8c8c8c"/><line x1="11" y1="796.5" x2="25" y2="796.5" stroke="#8c8c8c"/><text transform="translate(20,795.0) rotate(-90)" class="rl">128</text><rect x="10.5" y="133.5" width="1579" height="667" fill="none" stroke="#9c9c9c"/></g><circle cx="44" cy="166" r="7.2" fill="#e4e4e4"/><rect x="39.5" y="165" width="9" height="2.2" fill="#111"/><circle cx="131" cy="166" r="7.2" fill="#e4e4e4"/><rect x="126.5" y="165" width="9" height="2.2" fill="#111"/><rect x="129.9" y="161.5" width="2.2" height="9" fill="#111"/></svg>
<div class="a" style="left:61px;top:159px;font-size:14px;line-height:14px;color:#d8d8d8;letter-spacing:0.05px">224.5 %</div>
<div class="a" style="left:9px;top:812px;width:1581px;height:34px;background:#1b1c1f"></div>
<div class="a" style="left:19px;top:825px;width:8px;height:8px;border-radius:50%;background:#f05252"></div>
<div class="a t14" style="left:30px;top:822px;letter-spacing:1.31px;">Output</div><div class="a t14" style="left:94px;top:822px;letter-spacing:0.93px;">Debugger</div><div class="a t14" style="left:178px;top:822px;letter-spacing:1.15px;">Audio</div><div class="a t14" style="left:233px;top:822px;letter-spacing:0.88px;">Animation</div>
<div class="a t14" style="left:1505px;top:822px;letter-spacing:0.48px;color:#9a9a9a">3.3.2.stable</div>
</body></html>
